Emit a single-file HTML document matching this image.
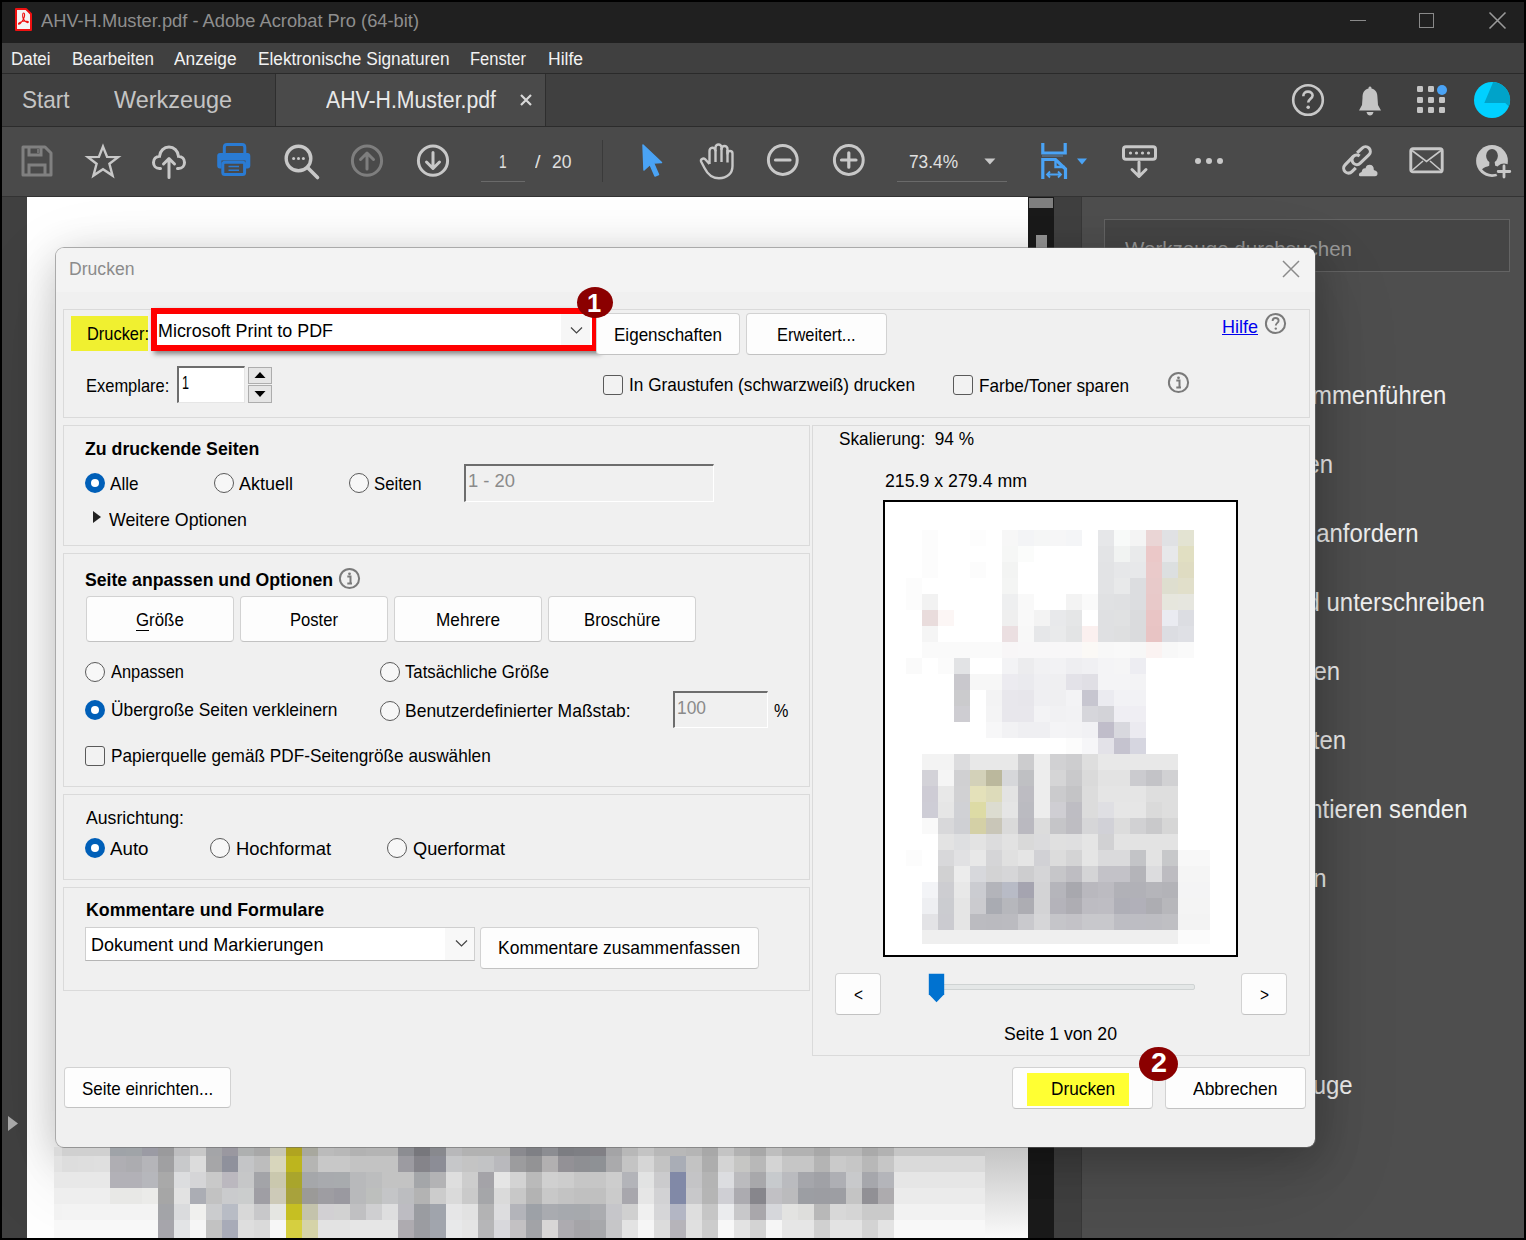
<!DOCTYPE html>
<html><head><meta charset="utf-8"><style>
html,body{margin:0;padding:0;}
body{width:1526px;height:1240px;position:relative;overflow:hidden;background:#000;font-family:"Liberation Sans",sans-serif;}
div{position:absolute;box-sizing:border-box;}
.t{white-space:nowrap;line-height:1;transform-origin:0 0;}
</style></head><body>
<div style="left:2px;top:2px;width:1522px;height:41px;background:#202020;"></div>
<div style="left:2px;top:43px;width:1522px;height:30px;background:#404040;"></div>
<div style="left:2px;top:73px;width:1522px;height:1px;background:#2a2a2a;"></div>
<div style="left:2px;top:74px;width:1522px;height:52px;background:#404040;"></div>
<div style="left:275px;top:74px;width:270px;height:52px;background:#4a4a4a;"></div>
<div style="left:275px;top:74px;width:1px;height:52px;background:#2e2e2e;"></div>
<div style="left:545px;top:74px;width:1px;height:52px;background:#2e2e2e;"></div>
<div style="left:2px;top:126px;width:1522px;height:1px;background:#2c2c2c;"></div>
<div style="left:2px;top:127px;width:1522px;height:69px;background:#4a4a4a;"></div>
<div style="left:2px;top:196px;width:1522px;height:1px;background:#333;"></div>
<div style="left:2px;top:197px;width:25px;height:1041px;background:#404040;"></div>
<div style="left:27px;top:197px;width:1001px;height:1041px;background:#ffffff;"></div>
<div style="left:1028px;top:197px;width:26px;height:1041px;background:#1a1a1a;"></div>
<div style="left:1029px;top:198px;width:24px;height:10px;background:#808080;"></div>
<div style="left:1036px;top:235px;width:11px;height:900px;background:#949494;"></div>
<div style="left:1054px;top:197px;width:27px;height:1041px;background:#404040;"></div>
<div style="left:1081px;top:197px;width:1px;height:1041px;background:#383838;"></div>
<div style="left:1082px;top:197px;width:442px;height:1041px;background:#4e4e4e;"></div>
<svg style="position:absolute;left:14px;top:7px;" width="19" height="25" viewBox="0 0 19 25"><path d="M2 2 H12 L17 7 V23 H2 Z" fill="#f4f4f4" stroke="#ee1111" stroke-width="2" stroke-linejoin="round"/><path d="M9.5 6 C11 6 11 9 9.5 12 C8 15 5 18 4.5 17 C4 16 8 14 11 14 C14 14 15 15 14 15.5 C13 16 10 14 9 11 C8.5 9 8.5 6 9.5 6Z" fill="none" stroke="#ee1111" stroke-width="1.1"/></svg>
<div class="t" style="left:41px;top:11.76px;font-size:18px;color:#8e8e8e;transform:scaleX(1.0156);">AHV-H.Muster.pdf - Adobe Acrobat Pro (64-bit)</div>
<div style="left:1350px;top:20px;width:16px;height:1px;background:#8a8a8a;"></div>
<div style="left:1419px;top:13px;width:15px;height:15px;background:transparent;border:1.5px solid #8a8a8a;"></div>
<svg style="position:absolute;left:1488px;top:11px;" width="19" height="19" viewBox="0 0 19 19"><path d="M1.5 1.5 L17.5 17.5 M17.5 1.5 L1.5 17.5" stroke="#9a9a9a" stroke-width="1.6"/></svg>
<div class="t" style="left:11px;top:49.86px;font-size:18px;color:#f2f2f2;transform:scaleX(0.9400);">Datei</div>
<div class="t" style="left:71.6px;top:49.86px;font-size:18px;color:#f2f2f2;transform:scaleX(0.9418);">Bearbeiten</div>
<div class="t" style="left:174.2px;top:49.86px;font-size:18px;color:#f2f2f2;transform:scaleX(0.9608);">Anzeige</div>
<div class="t" style="left:257.5px;top:49.86px;font-size:18px;color:#f2f2f2;transform:scaleX(0.9569);">Elektronische Signaturen</div>
<div class="t" style="left:470.3px;top:49.86px;font-size:18px;color:#f2f2f2;transform:scaleX(0.9177);">Fenster</div>
<div class="t" style="left:547.5px;top:49.86px;font-size:18px;color:#f2f2f2;transform:scaleX(0.9720);">Hilfe</div>
<div class="t" style="left:22.4px;top:87.88px;font-size:24.6px;color:#c4c4c4;transform:scaleX(0.9162);">Start</div>
<div class="t" style="left:114px;top:87.88px;font-size:24.6px;color:#c4c4c4;transform:scaleX(0.9518);">Werkzeuge</div>
<div class="t" style="left:325.6px;top:89.23px;font-size:23px;color:#e8e8e8;transform:scaleX(0.9236);">AHV-H.Muster.pdf</div>
<svg style="position:absolute;left:519px;top:93px;" width="14" height="14" viewBox="0 0 14 14"><path d="M2 2 L12 12 M12 2 L2 12" stroke="#d8d8d8" stroke-width="2.2"/></svg>
<svg style="position:absolute;left:1291px;top:83px;" width="34" height="34" viewBox="0 0 34 34"><circle cx="17" cy="17" r="14.8" fill="none" stroke="#c8c8c8" stroke-width="2.6"/><path d="M12.3 13.2 C12.3 9.8 14.5 8.6 17 8.6 C19.6 8.6 21.6 10.2 21.6 12.6 C21.6 15.6 17.2 16 17.2 19.6" fill="none" stroke="#c8c8c8" stroke-width="2.6"/><circle cx="17.2" cy="24.2" r="1.8" fill="#c8c8c8"/></svg>
<svg style="position:absolute;left:1356px;top:84px;" width="28" height="34" viewBox="0 0 28 34"><path d="M14 2.5 C15.5 2.5 15.5 4 15.5 4.5 C20 5.5 21.5 9 21.5 14 L22 21 L25 26.5 H3 L6 21 L6.5 14 C6.5 9 8 5.5 12.5 4.5 C12.5 4 12.5 2.5 14 2.5Z" fill="#c4c4c4"/><path d="M10.5 28 H17.5 C17 30.5 15.5 31.5 14 31.5 C12.5 31.5 11 30.5 10.5 28Z" fill="#c4c4c4"/></svg>
<div style="left:1417.3px;top:86.3px;width:6px;height:6px;background:#c4c4c4;border-radius:1.2px;"></div>
<div style="left:1417.3px;top:96.8px;width:6px;height:6px;background:#c4c4c4;border-radius:1.2px;"></div>
<div style="left:1417.3px;top:107.3px;width:6px;height:6px;background:#c4c4c4;border-radius:1.2px;"></div>
<div style="left:1428px;top:86.3px;width:6px;height:6px;background:#c4c4c4;border-radius:1.2px;"></div>
<div style="left:1428px;top:96.8px;width:6px;height:6px;background:#c4c4c4;border-radius:1.2px;"></div>
<div style="left:1428px;top:107.3px;width:6px;height:6px;background:#c4c4c4;border-radius:1.2px;"></div>
<div style="left:1438.5px;top:96.8px;width:6px;height:6px;background:#c4c4c4;border-radius:1.2px;"></div>
<div style="left:1438.5px;top:107.3px;width:6px;height:6px;background:#c4c4c4;border-radius:1.2px;"></div>
<div style="left:1437px;top:84.5px;width:10px;height:10px;border-radius:50%;background:#4aa3f5;"></div>
<svg style="position:absolute;left:1468px;top:76px;" width="48" height="48" viewBox="0 0 48 48"><circle cx="24" cy="24" r="18" fill="#00d0ff"/><path d="M25.2 6 L16.3 27.1 H37.2 L40.9 30.5 A18 18 0 0 0 25.2 6 Z" fill="#00a3c9"/></svg>
<svg style="position:absolute;left:20px;top:144px;" width="34" height="34" viewBox="0 0 34 34"><path d="M3 3 H25 L31 9 V31 H3 Z" fill="none" stroke="#808080" stroke-width="3" stroke-linejoin="round"/><path d="M9 3 V11 H21 V3" fill="none" stroke="#808080" stroke-width="3"/><path d="M18 5 V9" stroke="#808080" stroke-width="1.5"/><path d="M9 31 V21 H25 V31" fill="none" stroke="#808080" stroke-width="3"/></svg>
<svg style="position:absolute;left:84px;top:142px;" width="38" height="37" viewBox="0 0 38 37"><path d="M19 2.5 L23.4 13.6 L35.2 13.8 L25.9 21 L29.3 33.7 L19 26.8 L8.7 33.7 L12.1 21 L2.8 13.8 L14.6 13.6 Z" fill="none" stroke="#c8c8c8" stroke-width="2.6" stroke-linejoin="miter" transform="translate(19 19) scale(0.93) translate(-19 -18)"/></svg>
<svg style="position:absolute;left:151px;top:144px;" width="36" height="35" viewBox="0 0 36 35"><path d="M9.5 24.5 H8.5 C4.5 24.5 2.5 21.5 2.5 18.5 C2.5 15 5 12.5 8.5 12.3 C9 7 13 3 18 3 C23 3 27 7 27.5 12.3 C31 12.5 33.5 15 33.5 18.5 C33.5 21.5 31.5 24.5 27.5 24.5 H26.5" fill="none" stroke="#c8c8c8" stroke-width="3" stroke-linecap="round"/><path d="M18 33.5 V15 M12.5 20 L18 14.5 L23.5 20" fill="none" stroke="#c8c8c8" stroke-width="3" stroke-linecap="round" stroke-linejoin="round"/></svg>
<svg style="position:absolute;left:216px;top:143px;" width="36" height="35" viewBox="0 0 36 35"><path d="M8.3 11 V4.5 Q8.3 1.6 11 1.6 H26 Q28.8 1.6 28.8 4.5 V11" fill="none" stroke="#2a7bd3" stroke-width="3"/><path d="M4 10 H31.5 Q34.3 10 34.3 13 V22.5 Q34.3 25.5 31.5 25.5 H29.5 V17.5 H5.5 V25.5 H4 Q1.2 25.5 1.2 22.5 V13 Q1.2 10 4 10Z" fill="#2a7bd3"/><rect x="6.8" y="19.3" width="21.8" height="12.3" rx="2" fill="none" stroke="#2a7bd3" stroke-width="3"/><path d="M12.5 23.5 H23 M12.5 27.2 H23" stroke="#2a7bd3" stroke-width="1.5"/></svg>
<svg style="position:absolute;left:282px;top:142px;" width="40" height="40" viewBox="0 0 40 40"><circle cx="16.5" cy="16.5" r="12.3" fill="none" stroke="#c8c8c8" stroke-width="3.4"/><path d="M25.5 25.5 L35.5 35.5" stroke="#c8c8c8" stroke-width="3.6" stroke-linecap="round"/><circle cx="11.6" cy="16.5" r="1.5" fill="#c8c8c8"/><circle cx="16.5" cy="16.5" r="1.5" fill="#c8c8c8"/><circle cx="21.4" cy="16.5" r="1.5" fill="#c8c8c8"/></svg>
<svg style="position:absolute;left:350px;top:144px;" width="34" height="34" viewBox="0 0 34 34"><circle cx="17" cy="16.7" r="14.6" fill="none" stroke="#7e7e7e" stroke-width="3"/><path d="M17 25 V9.5 M10.5 15.5 L17 9 L23.5 15.5" fill="none" stroke="#7e7e7e" stroke-width="3" stroke-linecap="round" stroke-linejoin="round"/></svg>
<svg style="position:absolute;left:416px;top:144px;" width="34" height="34" viewBox="0 0 34 34"><circle cx="17" cy="16.7" r="14.6" fill="none" stroke="#c8c8c8" stroke-width="3"/><path d="M17 8.5 V24 M10.5 18 L17 24.5 L23.5 18" fill="none" stroke="#c8c8c8" stroke-width="3" stroke-linecap="round" stroke-linejoin="round"/></svg>
<div class="t" style="left:499px;top:152.76px;font-size:18px;color:#e0e0e0;transform:scaleX(0.7592);">1</div>
<div style="left:481px;top:181px;width:44px;height:1px;background:#6a6a6a;"></div>
<div class="t" style="left:535px;top:152.76px;font-size:18px;color:#e0e0e0;transform:scaleX(1.0998);">/</div>
<div class="t" style="left:552.2px;top:152.76px;font-size:18px;color:#e0e0e0;transform:scaleX(0.9739);">20</div>
<div style="left:602px;top:140px;width:1px;height:42px;background:#3a3a3a;"></div>
<svg style="position:absolute;left:640px;top:143px;" width="25" height="36" viewBox="0 0 25 36"><path d="M3 2 L21.5 19.5 L13.5 20 L18.5 31.5 L15 33 L10 21.5 L4 27 Z" fill="#4aa3f5" stroke="#4aa3f5" stroke-width="1.5" stroke-linejoin="round"/></svg>
<svg style="position:absolute;left:690px;top:138px;" width="55" height="47" viewBox="0 0 55 47"><path d="M19.5 26 V13 A3 3 0 0 1 25.5 12.5 V9.5 A3 3 0 0 1 31.5 9.5 V11 A3 3 0 0 1 37.5 11 V15.5 A2.5 2.5 0 0 1 42.5 15.5 V28 C42.5 35.5 37 40.3 29 40.3 C22 40.3 17.5 36 14.5 30 L11.2 23.8 C10.2 21.5 13 19.6 15.2 21.2 L19.5 26" fill="none" stroke="#c8c8c8" stroke-width="2.4" stroke-linejoin="round"/><path d="M25.5 12 V24 M31.5 10 V24 M37.5 12 V24.5" stroke="#c8c8c8" stroke-width="2.4"/></svg>
<svg style="position:absolute;left:765px;top:143px;" width="36" height="35" viewBox="0 0 36 35"><circle cx="17.8" cy="17" r="14.4" fill="none" stroke="#c8c8c8" stroke-width="3"/><path d="M10.5 17 H25" stroke="#c8c8c8" stroke-width="3.2" stroke-linecap="round"/></svg>
<svg style="position:absolute;left:831px;top:143px;" width="36" height="35" viewBox="0 0 36 35"><circle cx="17.8" cy="17" r="14.4" fill="none" stroke="#c8c8c8" stroke-width="3"/><path d="M10.5 17 H25 M17.8 9.8 V24.2" stroke="#c8c8c8" stroke-width="3.2" stroke-linecap="round"/></svg>
<div class="t" style="left:909px;top:152.76px;font-size:18px;color:#e0e0e0;transform:scaleX(0.9601);">73.4%</div>
<svg style="position:absolute;left:983px;top:157px;" width="14" height="9" viewBox="0 0 14 9"><path d="M1.4 1.5 H12.4 L6.9 7.6 Z" fill="#c8c8c8"/></svg>
<div style="left:897px;top:181px;width:110px;height:1px;background:#6a6a6a;"></div>
<svg style="position:absolute;left:1039px;top:141px;" width="30" height="40" viewBox="0 0 30 40"><path d="M3.8 2 V12 H26.2 V2" fill="none" stroke="#4aa3f5" stroke-width="3.2"/><path d="M3 15 H24" stroke="#59748f" stroke-width="1.5"/><path d="M3.8 38 V18.5 H16.5 L26.5 28 V38" fill="none" stroke="#4aa3f5" stroke-width="3.2"/><path d="M16.5 18.5 V26 H26" fill="none" stroke="#4aa3f5" stroke-width="2.4"/><path d="M8 33.5 H22 M11 30.5 L8 33.5 L11 36.5 M19 30.5 L22 33.5 L19 36.5" fill="none" stroke="#4aa3f5" stroke-width="1.8"/></svg>
<svg style="position:absolute;left:1076px;top:157px;" width="12" height="9" viewBox="0 0 12 9"><path d="M1 1.5 H11 L6 7.6 Z" fill="#4aa3f5"/></svg>
<svg style="position:absolute;left:1120px;top:144px;" width="38" height="36" viewBox="0 0 38 36"><rect x="3.5" y="2.8" width="32" height="12.5" rx="2.5" fill="none" stroke="#c8c8c8" stroke-width="3"/><circle cx="10.5" cy="9" r="1.6" fill="#c8c8c8"/><circle cx="16.5" cy="9" r="1.6" fill="#c8c8c8"/><circle cx="22.5" cy="9" r="1.6" fill="#c8c8c8"/><circle cx="28.5" cy="9" r="1.6" fill="#c8c8c8"/><path d="M19 18 V32 M12 25.5 L19 32.5 L26 25.5" fill="none" stroke="#c8c8c8" stroke-width="3" stroke-linecap="round" stroke-linejoin="round"/></svg>
<div style="left:1195.2px;top:158px;width:6px;height:6px;border-radius:50%;background:#c8c8c8;"></div>
<div style="left:1205.9px;top:158px;width:6px;height:6px;border-radius:50%;background:#c8c8c8;"></div>
<div style="left:1216.6px;top:158px;width:6px;height:6px;border-radius:50%;background:#c8c8c8;"></div>
<svg style="position:absolute;left:1336px;top:138px;" width="50" height="44" viewBox="0 0 50 44"><path d="M21.1 14.9 L26.18 10.02 A4.8 4.8 0 0 1 32.82 16.98 L24.24 25.16 A4.8 4.8 0 0 1 17.36 18.44" fill="none" stroke="#c8c8c8" stroke-width="3.1"/><path d="M23.68 17.96 A4.8 4.8 0 0 0 17.36 18.44 L9.06 26.94 A4.8 4.8 0 0 0 15.94 33.66 L19.8 29.9" fill="none" stroke="#c8c8c8" stroke-width="3.1"/><path d="M24 39 C21.5 39 21.5 34 25 33.5 C25.5 31 27 29.5 29 29.5 C29.5 27 31.5 26 33.5 26 C36.5 26 38.5 28.5 38.5 31.5 C41 32 42.2 33.5 42.2 35.5 C42.2 37.5 41 39 39 39 Z" fill="#c8c8c8" stroke="#4a4a4a" stroke-width="1.4"/></svg>
<svg style="position:absolute;left:1408px;top:146px;" width="36" height="29" viewBox="0 0 36 29"><rect x="2.8" y="2.7" width="31.4" height="23.2" rx="2.2" fill="none" stroke="#c8c8c8" stroke-width="2.9"/><path d="M4 4.5 L18.5 15.5 L33 4.5 M4 24.5 L15 15 M33 24.5 L22 15" fill="none" stroke="#c8c8c8" stroke-width="1.6"/></svg>
<svg style="position:absolute;left:1470px;top:138px;" width="46" height="44" viewBox="0 0 46 44"><circle cx="22" cy="23" r="15.9" fill="#c8c8c8"/><ellipse cx="22" cy="17.8" rx="5.9" ry="6.9" fill="#4a4a4a"/><path d="M12 31.2 C14 29.5 17 28.6 19.2 27.8 L19.5 23 H24.5 L25.2 27.8 C27.5 28.3 29.5 29 31.5 30 L27.8 35.6 C26 36 23.8 36.2 22 36.2 C18 36.2 14.5 34 12 31.2 Z" fill="#4a4a4a"/><circle cx="34" cy="33.5" r="8" fill="#4a4a4a"/><path d="M34 28 V39 M28.2 33.5 H39.8" stroke="#c8c8c8" stroke-width="2.8" stroke-linecap="round"/></svg>
<div style="left:1104px;top:219px;width:406px;height:53px;background:#454545;border:1px solid #646464;"></div>
<div class="t" style="left:1124.5px;top:238.87px;font-size:20px;color:#9a9a9a;transform:scaleX(1.0278);">Werkzeuge durchsuchen</div>
<div class="t" style="right:80px;top:383.34px;font-size:25px;color:#f0f0f0;transform:scaleX(0.957);transform-origin:100% 0;">Dateien zusammenführen</div>
<div class="t" style="right:193.20000000000005px;top:452.04px;font-size:25px;color:#f0f0f0;transform:scaleX(0.957);transform-origin:100% 0;">PDF bearbeiten</div>
<div class="t" style="right:107px;top:520.94px;font-size:25px;color:#f0f0f0;transform:scaleX(0.957);transform-origin:100% 0;">Unterschriften anfordern</div>
<div class="t" style="right:41px;top:589.74px;font-size:25px;color:#f0f0f0;transform:scaleX(0.957);transform-origin:100% 0;">Ausfüllen und unterschreiben</div>
<div class="t" style="right:186.20000000000005px;top:658.94px;font-size:25px;color:#f0f0f0;transform:scaleX(0.957);transform-origin:100% 0;">PDF exportieren</div>
<div class="t" style="right:180.29999999999995px;top:728.34px;font-size:25px;color:#f0f0f0;transform:scaleX(0.957);transform-origin:100% 0;">Formular vorbereiten</div>
<div class="t" style="right:58.299999999999955px;top:797.34px;font-size:25px;color:#f0f0f0;transform:scaleX(0.957);transform-origin:100% 0;">Zum Kommentieren senden</div>
<div class="t" style="right:199px;top:865.74px;font-size:25px;color:#f0f0f0;transform:scaleX(0.957);transform-origin:100% 0;">Kommentieren</div>
<div class="t" style="right:173.5px;top:1073.14px;font-size:25px;color:#f0f0f0;transform:scaleX(0.957);transform-origin:100% 0;">Weitere Werkzeuge</div>
<div style="left:55px;top:247px;width:1261px;height:901px;border-radius:9px;box-shadow:4px 10px 40px rgba(0,0,0,0.22),0 30px 90px rgba(0,0,0,0.12);"></div>
<div style="left:54px;top:1147px;width:931px;height:91px;overflow:hidden;"><div style="left:-8px;top:0px;width:16px;height:9px;background:#dadada"></div><div style="left:8px;top:0px;width:16px;height:9px;background:#d0d0d0"></div><div style="left:24px;top:0px;width:16px;height:9px;background:#d0d0d0"></div><div style="left:40px;top:0px;width:16px;height:9px;background:#d0d0d0"></div><div style="left:56px;top:0px;width:16px;height:9px;background:#9fa3a8"></div><div style="left:72px;top:0px;width:16px;height:9px;background:#a0a4a8"></div><div style="left:88px;top:0px;width:16px;height:9px;background:#9b9ba4"></div><div style="left:104px;top:0px;width:16px;height:9px;background:#9a9a9c"></div><div style="left:120px;top:0px;width:16px;height:9px;background:#bebec0"></div><div style="left:136px;top:0px;width:16px;height:9px;background:#c8c8c8"></div><div style="left:152px;top:0px;width:16px;height:9px;background:#a4a5a8"></div><div style="left:168px;top:0px;width:16px;height:9px;background:#9a98a0"></div><div style="left:184px;top:0px;width:16px;height:9px;background:#aeb0b0"></div><div style="left:200px;top:0px;width:16px;height:9px;background:#a8a8a8"></div><div style="left:216px;top:0px;width:16px;height:9px;background:#c8c7b6"></div><div style="left:232px;top:0px;width:16px;height:9px;background:#b0a420"></div><div style="left:248px;top:0px;width:16px;height:9px;background:#a8a89e"></div><div style="left:264px;top:0px;width:16px;height:9px;background:#bbbbbb"></div><div style="left:280px;top:0px;width:16px;height:9px;background:#b8b8b8"></div><div style="left:296px;top:0px;width:16px;height:9px;background:#b2b2b2"></div><div style="left:312px;top:0px;width:16px;height:9px;background:#b4b4b4"></div><div style="left:328px;top:0px;width:16px;height:9px;background:#b4b4b4"></div><div style="left:344px;top:0px;width:16px;height:9px;background:#8c8d92"></div><div style="left:360px;top:0px;width:16px;height:9px;background:#77777c"></div><div style="left:376px;top:0px;width:16px;height:9px;background:#88898e"></div><div style="left:392px;top:0px;width:16px;height:9px;background:#b8b8ba"></div><div style="left:408px;top:0px;width:16px;height:9px;background:#b2b2b2"></div><div style="left:424px;top:0px;width:16px;height:9px;background:#b2b2b2"></div><div style="left:440px;top:0px;width:16px;height:9px;background:#b2b2b2"></div><div style="left:456px;top:0px;width:16px;height:9px;background:#8a8a8f"></div><div style="left:472px;top:0px;width:16px;height:9px;background:#7f8085"></div><div style="left:488px;top:0px;width:16px;height:9px;background:#8c8d92"></div><div style="left:504px;top:0px;width:16px;height:9px;background:#7c7d82"></div><div style="left:520px;top:0px;width:16px;height:9px;background:#7e7f84"></div><div style="left:536px;top:0px;width:16px;height:9px;background:#818085"></div><div style="left:552px;top:0px;width:16px;height:9px;background:#a4a4a6"></div><div style="left:568px;top:0px;width:16px;height:9px;background:#b8b8b8"></div><div style="left:584px;top:0px;width:16px;height:9px;background:#c4c4c4"></div><div style="left:600px;top:0px;width:16px;height:9px;background:#b8b8b8"></div><div style="left:616px;top:0px;width:16px;height:9px;background:#b8b8b8"></div><div style="left:632px;top:0px;width:16px;height:9px;background:#b5b5b5"></div><div style="left:648px;top:0px;width:16px;height:9px;background:#a8a8a8"></div><div style="left:664px;top:0px;width:16px;height:9px;background:#c4c4c4"></div><div style="left:680px;top:0px;width:16px;height:9px;background:#b2b2b2"></div><div style="left:696px;top:0px;width:16px;height:9px;background:#a8a8a8"></div><div style="left:712px;top:0px;width:16px;height:9px;background:#bebebe"></div><div style="left:728px;top:0px;width:16px;height:9px;background:#b2b2b2"></div><div style="left:744px;top:0px;width:16px;height:9px;background:#b2b2b2"></div><div style="left:760px;top:0px;width:16px;height:9px;background:#a8a8a8"></div><div style="left:776px;top:0px;width:16px;height:9px;background:#b8b8b8"></div><div style="left:792px;top:0px;width:16px;height:9px;background:#b8b8b8"></div><div style="left:808px;top:0px;width:16px;height:9px;background:#aaaaaa"></div><div style="left:824px;top:0px;width:16px;height:9px;background:#b2b2b2"></div><div style="left:840px;top:0px;width:16px;height:9px;background:#c6c6c6"></div><div style="left:856px;top:0px;width:16px;height:9px;background:#c6c6c6"></div><div style="left:872px;top:0px;width:16px;height:9px;background:#c6c6c6"></div><div style="left:888px;top:0px;width:16px;height:9px;background:#c6c6c6"></div><div style="left:904px;top:0px;width:16px;height:9px;background:#c6c6c6"></div><div style="left:920px;top:0px;width:16px;height:9px;background:#c6c6c6"></div><div style="left:-8px;top:9px;width:16px;height:16px;background:#e2e2e2"></div><div style="left:8px;top:9px;width:16px;height:16px;background:#dddddd"></div><div style="left:24px;top:9px;width:16px;height:16px;background:#dedede"></div><div style="left:40px;top:9px;width:16px;height:16px;background:#dfdfdf"></div><div style="left:56px;top:9px;width:16px;height:16px;background:#afaeb3"></div><div style="left:72px;top:9px;width:16px;height:16px;background:#acacb0"></div><div style="left:88px;top:9px;width:16px;height:16px;background:#b5b5b9"></div><div style="left:104px;top:9px;width:16px;height:16px;background:#a0a0a2"></div><div style="left:120px;top:9px;width:16px;height:16px;background:#c8c9cb"></div><div style="left:136px;top:9px;width:16px;height:16px;background:#dcdcdc"></div><div style="left:152px;top:9px;width:16px;height:16px;background:#a6a6a8"></div><div style="left:168px;top:9px;width:16px;height:16px;background:#8f919c"></div><div style="left:184px;top:9px;width:16px;height:16px;background:#c4c5c7"></div><div style="left:200px;top:9px;width:16px;height:16px;background:#bdbdbd"></div><div style="left:216px;top:9px;width:16px;height:16px;background:#d8d6bc"></div><div style="left:232px;top:9px;width:16px;height:16px;background:#bdb51e"></div><div style="left:248px;top:9px;width:16px;height:16px;background:#b5b5b3"></div><div style="left:264px;top:9px;width:16px;height:16px;background:#c8c8c8"></div><div style="left:280px;top:9px;width:16px;height:16px;background:#c8c8c8"></div><div style="left:296px;top:9px;width:16px;height:16px;background:#c3c3c3"></div><div style="left:312px;top:9px;width:16px;height:16px;background:#c3c3c3"></div><div style="left:328px;top:9px;width:16px;height:16px;background:#c3c3c3"></div><div style="left:344px;top:9px;width:16px;height:16px;background:#9c9ba1"></div><div style="left:360px;top:9px;width:16px;height:16px;background:#85848a"></div><div style="left:376px;top:9px;width:16px;height:16px;background:#8c8d96"></div><div style="left:392px;top:9px;width:16px;height:16px;background:#c6c7c9"></div><div style="left:408px;top:9px;width:16px;height:16px;background:#c4c4c4"></div><div style="left:424px;top:9px;width:16px;height:16px;background:#c2c3c5"></div><div style="left:440px;top:9px;width:16px;height:16px;background:#b9b9bd"></div><div style="left:456px;top:9px;width:16px;height:16px;background:#9c9c9e"></div><div style="left:472px;top:9px;width:16px;height:16px;background:#939395"></div><div style="left:488px;top:9px;width:16px;height:16px;background:#b2b0b1"></div><div style="left:504px;top:9px;width:16px;height:16px;background:#939196"></div><div style="left:520px;top:9px;width:16px;height:16px;background:#8e8f93"></div><div style="left:536px;top:9px;width:16px;height:16px;background:#8e9195"></div><div style="left:552px;top:9px;width:16px;height:16px;background:#aaaaac"></div><div style="left:568px;top:9px;width:16px;height:16px;background:#c4c4c4"></div><div style="left:584px;top:9px;width:16px;height:16px;background:#d6d6d6"></div><div style="left:600px;top:9px;width:16px;height:16px;background:#c3c3c3"></div><div style="left:616px;top:9px;width:16px;height:16px;background:#a9adb6"></div><div style="left:632px;top:9px;width:16px;height:16px;background:#c3c3c3"></div><div style="left:648px;top:9px;width:16px;height:16px;background:#adadad"></div><div style="left:664px;top:9px;width:16px;height:16px;background:#d4d4d4"></div><div style="left:680px;top:9px;width:16px;height:16px;background:#c6c6c4"></div><div style="left:696px;top:9px;width:16px;height:16px;background:#b8b8b8"></div><div style="left:712px;top:9px;width:16px;height:16px;background:#d4d4d4"></div><div style="left:728px;top:9px;width:16px;height:16px;background:#c6c6c6"></div><div style="left:744px;top:9px;width:16px;height:16px;background:#c6c6c6"></div><div style="left:760px;top:9px;width:16px;height:16px;background:#b4b4b4"></div><div style="left:776px;top:9px;width:16px;height:16px;background:#cacaca"></div><div style="left:792px;top:9px;width:16px;height:16px;background:#c6c6c6"></div><div style="left:808px;top:9px;width:16px;height:16px;background:#b8b8b8"></div><div style="left:824px;top:9px;width:16px;height:16px;background:#c6c6c6"></div><div style="left:840px;top:9px;width:16px;height:16px;background:#dadada"></div><div style="left:856px;top:9px;width:16px;height:16px;background:#dadada"></div><div style="left:872px;top:9px;width:16px;height:16px;background:#dadada"></div><div style="left:888px;top:9px;width:16px;height:16px;background:#dadada"></div><div style="left:904px;top:9px;width:16px;height:16px;background:#dadada"></div><div style="left:920px;top:9px;width:16px;height:16px;background:#dadada"></div><div style="left:-8px;top:25px;width:16px;height:16px;background:#e8e8e8"></div><div style="left:8px;top:25px;width:16px;height:16px;background:#e8e8e8"></div><div style="left:24px;top:25px;width:16px;height:16px;background:#e8e8e8"></div><div style="left:40px;top:25px;width:16px;height:16px;background:#e8e8e8"></div><div style="left:56px;top:25px;width:16px;height:16px;background:#b2b1b7"></div><div style="left:72px;top:25px;width:16px;height:16px;background:#b2b1b7"></div><div style="left:88px;top:25px;width:16px;height:16px;background:#b6b7bc"></div><div style="left:104px;top:25px;width:16px;height:16px;background:#a9a9a9"></div><div style="left:120px;top:25px;width:16px;height:16px;background:#dcdddf"></div><div style="left:136px;top:25px;width:16px;height:16px;background:#d5d5d7"></div><div style="left:152px;top:25px;width:16px;height:16px;background:#c9c9c9"></div><div style="left:168px;top:25px;width:16px;height:16px;background:#bbb8bf"></div><div style="left:184px;top:25px;width:16px;height:16px;background:#c6c7c8"></div><div style="left:200px;top:25px;width:16px;height:16px;background:#a3a4a8"></div><div style="left:216px;top:25px;width:16px;height:16px;background:#cac8ae"></div><div style="left:232px;top:25px;width:16px;height:16px;background:#a9a52c"></div><div style="left:248px;top:25px;width:16px;height:16px;background:#a5a7aa"></div><div style="left:264px;top:25px;width:16px;height:16px;background:#a8aaae"></div><div style="left:280px;top:25px;width:16px;height:16px;background:#a8abae"></div><div style="left:296px;top:25px;width:16px;height:16px;background:#b8b9bb"></div><div style="left:312px;top:25px;width:16px;height:16px;background:#bcbdbe"></div><div style="left:328px;top:25px;width:16px;height:16px;background:#c3c3c3"></div><div style="left:344px;top:25px;width:16px;height:16px;background:#c3c3c3"></div><div style="left:360px;top:25px;width:16px;height:16px;background:#a4a6a9"></div><div style="left:376px;top:25px;width:16px;height:16px;background:#b3b3b5"></div><div style="left:392px;top:25px;width:16px;height:16px;background:#dedede"></div><div style="left:408px;top:25px;width:16px;height:16px;background:#cdcdcd"></div><div style="left:424px;top:25px;width:16px;height:16px;background:#a4a3a8"></div><div style="left:440px;top:25px;width:16px;height:16px;background:#e5e5e5"></div><div style="left:456px;top:25px;width:16px;height:16px;background:#d3d3d3"></div><div style="left:472px;top:25px;width:16px;height:16px;background:#bababa"></div><div style="left:488px;top:25px;width:16px;height:16px;background:#d0d0d0"></div><div style="left:504px;top:25px;width:16px;height:16px;background:#cdcdcd"></div><div style="left:520px;top:25px;width:16px;height:16px;background:#c6c6c6"></div><div style="left:536px;top:25px;width:16px;height:16px;background:#c6c6c6"></div><div style="left:552px;top:25px;width:16px;height:16px;background:#cdcdcd"></div><div style="left:568px;top:25px;width:16px;height:16px;background:#b3b4b9"></div><div style="left:584px;top:25px;width:16px;height:16px;background:#e2e3e3"></div><div style="left:600px;top:25px;width:16px;height:16px;background:#cbcbcd"></div><div style="left:616px;top:25px;width:16px;height:16px;background:#8189a7"></div><div style="left:632px;top:25px;width:16px;height:16px;background:#c4c4c6"></div><div style="left:648px;top:25px;width:16px;height:16px;background:#b4b4b4"></div><div style="left:664px;top:25px;width:16px;height:16px;background:#dcdde0"></div><div style="left:680px;top:25px;width:16px;height:16px;background:#bbbbbe"></div><div style="left:696px;top:25px;width:16px;height:16px;background:#a8a8ab"></div><div style="left:712px;top:25px;width:16px;height:16px;background:#c7cacd"></div><div style="left:728px;top:25px;width:16px;height:16px;background:#babbbf"></div><div style="left:744px;top:25px;width:16px;height:16px;background:#a5a6ab"></div><div style="left:760px;top:25px;width:16px;height:16px;background:#a0a1a6"></div><div style="left:776px;top:25px;width:16px;height:16px;background:#aeafb4"></div><div style="left:792px;top:25px;width:16px;height:16px;background:#c8c9cb"></div><div style="left:808px;top:25px;width:16px;height:16px;background:#a6a7ac"></div><div style="left:824px;top:25px;width:16px;height:16px;background:#b4b5ba"></div><div style="left:840px;top:25px;width:16px;height:16px;background:#e6e6e6"></div><div style="left:856px;top:25px;width:16px;height:16px;background:#e6e6e6"></div><div style="left:872px;top:25px;width:16px;height:16px;background:#e6e6e6"></div><div style="left:888px;top:25px;width:16px;height:16px;background:#e6e6e6"></div><div style="left:904px;top:25px;width:16px;height:16px;background:#e6e6e6"></div><div style="left:920px;top:25px;width:16px;height:16px;background:#e6e6e6"></div><div style="left:-8px;top:41px;width:16px;height:16px;background:#eeeeee"></div><div style="left:8px;top:41px;width:16px;height:16px;background:#eeeeee"></div><div style="left:24px;top:41px;width:16px;height:16px;background:#eeeeee"></div><div style="left:40px;top:41px;width:16px;height:16px;background:#eeeeee"></div><div style="left:56px;top:41px;width:16px;height:16px;background:#e8e8e6"></div><div style="left:72px;top:41px;width:16px;height:16px;background:#e8e8e6"></div><div style="left:88px;top:41px;width:16px;height:16px;background:#ebebe9"></div><div style="left:104px;top:41px;width:16px;height:16px;background:#a6a6a6"></div><div style="left:120px;top:41px;width:16px;height:16px;background:#e2e2e2"></div><div style="left:136px;top:41px;width:16px;height:16px;background:#abadb4"></div><div style="left:152px;top:41px;width:16px;height:16px;background:#c2c2c2"></div><div style="left:168px;top:41px;width:16px;height:16px;background:#cacbcd"></div><div style="left:184px;top:41px;width:16px;height:16px;background:#cbcdcd"></div><div style="left:200px;top:41px;width:16px;height:16px;background:#9f9ea4"></div><div style="left:216px;top:41px;width:16px;height:16px;background:#cdcab8"></div><div style="left:232px;top:41px;width:16px;height:16px;background:#a8a23c"></div><div style="left:248px;top:41px;width:16px;height:16px;background:#9b9a98"></div><div style="left:264px;top:41px;width:16px;height:16px;background:#9e9da2"></div><div style="left:280px;top:41px;width:16px;height:16px;background:#9a99a0"></div><div style="left:296px;top:41px;width:16px;height:16px;background:#b8b9bb"></div><div style="left:312px;top:41px;width:16px;height:16px;background:#bdbfbd"></div><div style="left:328px;top:41px;width:16px;height:16px;background:#c4c5c7"></div><div style="left:344px;top:41px;width:16px;height:16px;background:#bcbdc0"></div><div style="left:360px;top:41px;width:16px;height:16px;background:#b3b3b3"></div><div style="left:376px;top:41px;width:16px;height:16px;background:#cccccc"></div><div style="left:392px;top:41px;width:16px;height:16px;background:#dadada"></div><div style="left:408px;top:41px;width:16px;height:16px;background:#cacaca"></div><div style="left:424px;top:41px;width:16px;height:16px;background:#a5a6a9"></div><div style="left:440px;top:41px;width:16px;height:16px;background:#dadada"></div><div style="left:456px;top:41px;width:16px;height:16px;background:#c8c8c8"></div><div style="left:472px;top:41px;width:16px;height:16px;background:#b3b3b3"></div><div style="left:488px;top:41px;width:16px;height:16px;background:#c8c8c8"></div><div style="left:504px;top:41px;width:16px;height:16px;background:#c3c3c3"></div><div style="left:520px;top:41px;width:16px;height:16px;background:#c0c0c0"></div><div style="left:536px;top:41px;width:16px;height:16px;background:#c0c0c0"></div><div style="left:552px;top:41px;width:16px;height:16px;background:#cbcbcb"></div><div style="left:568px;top:41px;width:16px;height:16px;background:#a8a7ad"></div><div style="left:584px;top:41px;width:16px;height:16px;background:#e6e6e6"></div><div style="left:600px;top:41px;width:16px;height:16px;background:#d2d2d4"></div><div style="left:616px;top:41px;width:16px;height:16px;background:#8189a7"></div><div style="left:632px;top:41px;width:16px;height:16px;background:#c8c8ca"></div><div style="left:648px;top:41px;width:16px;height:16px;background:#b5b5b5"></div><div style="left:664px;top:41px;width:16px;height:16px;background:#cfcfd4"></div><div style="left:680px;top:41px;width:16px;height:16px;background:#acabb0"></div><div style="left:696px;top:41px;width:16px;height:16px;background:#87868c"></div><div style="left:712px;top:41px;width:16px;height:16px;background:#c1c0c4"></div><div style="left:728px;top:41px;width:16px;height:16px;background:#bbbbbd"></div><div style="left:744px;top:41px;width:16px;height:16px;background:#9c9ea3"></div><div style="left:760px;top:41px;width:16px;height:16px;background:#9c9da2"></div><div style="left:776px;top:41px;width:16px;height:16px;background:#9d9ea3"></div><div style="left:792px;top:41px;width:16px;height:16px;background:#c4c4c4"></div><div style="left:808px;top:41px;width:16px;height:16px;background:#919095"></div><div style="left:824px;top:41px;width:16px;height:16px;background:#adabae"></div><div style="left:840px;top:41px;width:16px;height:16px;background:#ebebeb"></div><div style="left:856px;top:41px;width:16px;height:16px;background:#ebebeb"></div><div style="left:872px;top:41px;width:16px;height:16px;background:#ebebeb"></div><div style="left:888px;top:41px;width:16px;height:16px;background:#ebebeb"></div><div style="left:904px;top:41px;width:16px;height:16px;background:#ebebeb"></div><div style="left:920px;top:41px;width:16px;height:16px;background:#ebebeb"></div><div style="left:-8px;top:57px;width:16px;height:16px;background:#f2f2f2"></div><div style="left:8px;top:57px;width:16px;height:16px;background:#f3f3f3"></div><div style="left:24px;top:57px;width:16px;height:16px;background:#f3f3f3"></div><div style="left:40px;top:57px;width:16px;height:16px;background:#f3f3f3"></div><div style="left:56px;top:57px;width:16px;height:16px;background:#f3f3f3"></div><div style="left:72px;top:57px;width:16px;height:16px;background:#f3f3f3"></div><div style="left:88px;top:57px;width:16px;height:16px;background:#f3f3f3"></div><div style="left:104px;top:57px;width:16px;height:16px;background:#a3a4a8"></div><div style="left:120px;top:57px;width:16px;height:16px;background:#dadbdd"></div><div style="left:136px;top:57px;width:16px;height:16px;background:#f0f0ee"></div><div style="left:152px;top:57px;width:16px;height:16px;background:#cbccce"></div><div style="left:168px;top:57px;width:16px;height:16px;background:#b8bcc5"></div><div style="left:184px;top:57px;width:16px;height:16px;background:#d8d8d8"></div><div style="left:200px;top:57px;width:16px;height:16px;background:#c8c8ca"></div><div style="left:216px;top:57px;width:16px;height:16px;background:#e5e6e2"></div><div style="left:232px;top:57px;width:16px;height:16px;background:#c6bf22"></div><div style="left:248px;top:57px;width:16px;height:16px;background:#c4c3ac"></div><div style="left:264px;top:57px;width:16px;height:16px;background:#d2d0d3"></div><div style="left:280px;top:57px;width:16px;height:16px;background:#d2d2d2"></div><div style="left:296px;top:57px;width:16px;height:16px;background:#c0c0c2"></div><div style="left:312px;top:57px;width:16px;height:16px;background:#cfcfd1"></div><div style="left:328px;top:57px;width:16px;height:16px;background:#dededf"></div><div style="left:344px;top:57px;width:16px;height:16px;background:#bdbcc2"></div><div style="left:360px;top:57px;width:16px;height:16px;background:#9a9ca1"></div><div style="left:376px;top:57px;width:16px;height:16px;background:#a0a4ac"></div><div style="left:392px;top:57px;width:16px;height:16px;background:#e6e6e7"></div><div style="left:408px;top:57px;width:16px;height:16px;background:#e2e2e2"></div><div style="left:424px;top:57px;width:16px;height:16px;background:#b3b3b4"></div><div style="left:440px;top:57px;width:16px;height:16px;background:#dddddf"></div><div style="left:456px;top:57px;width:16px;height:16px;background:#b3b4ba"></div><div style="left:472px;top:57px;width:16px;height:16px;background:#9da1a7"></div><div style="left:488px;top:57px;width:16px;height:16px;background:#a9abb0"></div><div style="left:504px;top:57px;width:16px;height:16px;background:#a6a9ae"></div><div style="left:520px;top:57px;width:16px;height:16px;background:#a6a9ad"></div><div style="left:536px;top:57px;width:16px;height:16px;background:#abacb0"></div><div style="left:552px;top:57px;width:16px;height:16px;background:#c6c6ca"></div><div style="left:568px;top:57px;width:16px;height:16px;background:#d0d0d0"></div><div style="left:584px;top:57px;width:16px;height:16px;background:#f0f0f0"></div><div style="left:600px;top:57px;width:16px;height:16px;background:#d6d6d8"></div><div style="left:616px;top:57px;width:16px;height:16px;background:#b3b6c4"></div><div style="left:632px;top:57px;width:16px;height:16px;background:#dedede"></div><div style="left:648px;top:57px;width:16px;height:16px;background:#c6c6c6"></div><div style="left:664px;top:57px;width:16px;height:16px;background:#ebecee"></div><div style="left:680px;top:57px;width:16px;height:16px;background:#c8c8ca"></div><div style="left:696px;top:57px;width:16px;height:16px;background:#a9a7ab"></div><div style="left:712px;top:57px;width:16px;height:16px;background:#d6d7db"></div><div style="left:728px;top:57px;width:16px;height:16px;background:#e3e3e1"></div><div style="left:744px;top:57px;width:16px;height:16px;background:#dededc"></div><div style="left:760px;top:57px;width:16px;height:16px;background:#b8b8b8"></div><div style="left:776px;top:57px;width:16px;height:16px;background:#d8d8d8"></div><div style="left:792px;top:57px;width:16px;height:16px;background:#d5d5d5"></div><div style="left:808px;top:57px;width:16px;height:16px;background:#cacaca"></div><div style="left:824px;top:57px;width:16px;height:16px;background:#cacaca"></div><div style="left:840px;top:57px;width:16px;height:16px;background:#f2f2f2"></div><div style="left:856px;top:57px;width:16px;height:16px;background:#f2f2f2"></div><div style="left:872px;top:57px;width:16px;height:16px;background:#f2f2f2"></div><div style="left:888px;top:57px;width:16px;height:16px;background:#f2f2f2"></div><div style="left:904px;top:57px;width:16px;height:16px;background:#f2f2f2"></div><div style="left:920px;top:57px;width:16px;height:16px;background:#f2f2f2"></div><div style="left:-8px;top:73px;width:16px;height:18px;background:#f8f8f8"></div><div style="left:8px;top:73px;width:16px;height:18px;background:#f8f8f8"></div><div style="left:24px;top:73px;width:16px;height:18px;background:#f8f8f8"></div><div style="left:40px;top:73px;width:16px;height:18px;background:#f8f8f8"></div><div style="left:56px;top:73px;width:16px;height:18px;background:#f8f8f8"></div><div style="left:72px;top:73px;width:16px;height:18px;background:#f8f8f8"></div><div style="left:88px;top:73px;width:16px;height:18px;background:#f8f8f8"></div><div style="left:104px;top:73px;width:16px;height:18px;background:#a6a5ab"></div><div style="left:120px;top:73px;width:16px;height:18px;background:#e3e4e6"></div><div style="left:136px;top:73px;width:16px;height:18px;background:#f6f6f6"></div><div style="left:152px;top:73px;width:16px;height:18px;background:#c2c2c2"></div><div style="left:168px;top:73px;width:16px;height:18px;background:#a8abb8"></div><div style="left:184px;top:73px;width:16px;height:18px;background:#dedede"></div><div style="left:200px;top:73px;width:16px;height:18px;background:#dadada"></div><div style="left:216px;top:73px;width:16px;height:18px;background:#f7f7f7"></div><div style="left:232px;top:73px;width:16px;height:18px;background:#d6cf40"></div><div style="left:248px;top:73px;width:16px;height:18px;background:#d5d3a8"></div><div style="left:264px;top:73px;width:16px;height:18px;background:#e3e3e3"></div><div style="left:280px;top:73px;width:16px;height:18px;background:#e3e3e3"></div><div style="left:296px;top:73px;width:16px;height:18px;background:#e6e6e6"></div><div style="left:312px;top:73px;width:16px;height:18px;background:#e6e6e6"></div><div style="left:328px;top:73px;width:16px;height:18px;background:#e6e6e6"></div><div style="left:344px;top:73px;width:16px;height:18px;background:#aeabb0"></div><div style="left:360px;top:73px;width:16px;height:18px;background:#9b9ca1"></div><div style="left:376px;top:73px;width:16px;height:18px;background:#a1a5ad"></div><div style="left:392px;top:73px;width:16px;height:18px;background:#e8e9ea"></div><div style="left:408px;top:73px;width:16px;height:18px;background:#e5e5e5"></div><div style="left:424px;top:73px;width:16px;height:18px;background:#b6b6b8"></div><div style="left:440px;top:73px;width:16px;height:18px;background:#d8d8dc"></div><div style="left:456px;top:73px;width:16px;height:18px;background:#c3c1c3"></div><div style="left:472px;top:73px;width:16px;height:18px;background:#a2a3a7"></div><div style="left:488px;top:73px;width:16px;height:18px;background:#d8d6d6"></div><div style="left:504px;top:73px;width:16px;height:18px;background:#adabb0"></div><div style="left:520px;top:73px;width:16px;height:18px;background:#a5a4a8"></div><div style="left:536px;top:73px;width:16px;height:18px;background:#a7a8ab"></div><div style="left:552px;top:73px;width:16px;height:18px;background:#c6c6c8"></div><div style="left:568px;top:73px;width:16px;height:18px;background:#e3e3e3"></div><div style="left:584px;top:73px;width:16px;height:18px;background:#f6f6f6"></div><div style="left:600px;top:73px;width:16px;height:18px;background:#dcdcdc"></div><div style="left:616px;top:73px;width:16px;height:18px;background:#b6b4ba"></div><div style="left:632px;top:73px;width:16px;height:18px;background:#e0e0e0"></div><div style="left:648px;top:73px;width:16px;height:18px;background:#cccccc"></div><div style="left:664px;top:73px;width:16px;height:18px;background:#f8f8f8"></div><div style="left:680px;top:73px;width:16px;height:18px;background:#e3e3e3"></div><div style="left:696px;top:73px;width:16px;height:18px;background:#d3d3d3"></div><div style="left:712px;top:73px;width:16px;height:18px;background:#f6f6f6"></div><div style="left:728px;top:73px;width:16px;height:18px;background:#e6e6e6"></div><div style="left:744px;top:73px;width:16px;height:18px;background:#e6e6e6"></div><div style="left:760px;top:73px;width:16px;height:18px;background:#d0d0d0"></div><div style="left:776px;top:73px;width:16px;height:18px;background:#e3e3e3"></div><div style="left:792px;top:73px;width:16px;height:18px;background:#e3e3e3"></div><div style="left:808px;top:73px;width:16px;height:18px;background:#d3d3d3"></div><div style="left:824px;top:73px;width:16px;height:18px;background:#e3e3e3"></div><div style="left:840px;top:73px;width:16px;height:18px;background:#f8f8f8"></div><div style="left:856px;top:73px;width:16px;height:18px;background:#f8f8f8"></div><div style="left:872px;top:73px;width:16px;height:18px;background:#f8f8f8"></div><div style="left:888px;top:73px;width:16px;height:18px;background:#f8f8f8"></div><div style="left:904px;top:73px;width:16px;height:18px;background:#f8f8f8"></div><div style="left:920px;top:73px;width:16px;height:18px;background:#f8f8f8"></div></div>
<div style="left:985px;top:1147px;width:43px;height:91px;background:linear-gradient(#c4c4c4,#fafafa);"></div>
<svg style="position:absolute;left:7px;top:1115px;" width="12" height="18" viewBox="0 0 12 18"><path d="M1 1 L11 8.5 L1 16 Z" fill="#a8a8a8"/></svg>
<div style="left:55px;top:247px;width:1261px;height:901px;border-radius:9px;background:#f0f0f0;background-clip:padding-box;border:1px solid rgba(100,100,100,0.55);overflow:hidden;"><div style="left:0;top:0;width:1261px;height:44px;background:#f3f3f3;"></div></div>
<div class="t" style="left:68.8px;top:260.06px;font-size:18px;color:#8b8b8b;transform:scaleX(0.9772);">Drucken</div>
<svg style="position:absolute;left:1281px;top:259px;" width="20" height="20" viewBox="0 0 20 20"><path d="M2 2 L18 18 M18 2 L2 18" stroke="#8a8a8a" stroke-width="1.5"/></svg>
<div style="left:63px;top:309px;width:1247px;height:109px;background:transparent;border:1px solid #dadada;"></div>
<div style="left:63px;top:425px;width:747px;height:121px;background:transparent;border:1px solid #dadada;"></div>
<div style="left:63px;top:553px;width:747px;height:234px;background:transparent;border:1px solid #dadada;"></div>
<div style="left:63px;top:794px;width:747px;height:86px;background:transparent;border:1px solid #dadada;"></div>
<div style="left:63px;top:887px;width:747px;height:104px;background:transparent;border:1px solid #dadada;"></div>
<div style="left:812px;top:425px;width:498px;height:631px;background:transparent;border:1px solid #dadada;"></div>
<div style="left:71px;top:316px;width:77px;height:35px;background:#f0f030;"></div>
<div class="t" style="left:86.5px;top:324.32px;font-size:19px;color:#000;transform:scaleX(0.8636);">Drucker:</div>
<div style="left:151px;top:308px;width:446.8px;height:43px;background:#fff;border:6px solid #ff0000;box-shadow:3px 3px 5px rgba(0,0,0,0.45);"></div>
<div style="left:561px;top:314px;width:29px;height:31px;background:#f6f6f6;"></div>
<div class="t" style="left:158px;top:321.02px;font-size:19px;color:#000;transform:scaleX(0.9418);">Microsoft Print to PDF</div>
<svg style="position:absolute;left:570px;top:326.3px;" width="13" height="9" viewBox="0 0 13 9"><path d="M1 1.5 L6.5 7 L12 1.5" fill="none" stroke="#444" stroke-width="1.2"/></svg>
<div style="left:596px;top:313px;width:144px;height:42px;background:#fdfdfd;border:1px solid #d2d2d2;border-radius:4px;border-bottom-color:#c2c2c2;"></div>
<div class="t" style="left:613.5px;top:325.32px;font-size:19px;color:#000;transform:scaleX(0.8969);">Eigenschaften</div>
<div style="left:746px;top:313px;width:141px;height:42px;background:#fdfdfd;border:1px solid #d2d2d2;border-radius:4px;border-bottom-color:#c2c2c2;"></div>
<div class="t" style="left:776.8px;top:325.32px;font-size:19px;color:#000;transform:scaleX(0.8646);">Erweitert...</div>
<div style="left:576.9px;top:286.7px;width:36.3px;height:31.2px;border-radius:50%;background:#8b0000;"></div>
<div class="t" style="left:587.3px;top:289.62px;font-size:26.2px;color:#fff;font-weight:700;transform:scaleX(0.9745);">1</div>
<div class="t" style="left:1222px;top:316.72px;font-size:19px;color:#0000ee;transform:scaleX(0.9471);text-decoration:underline;">Hilfe</div>
<svg style="position:absolute;left:1264px;top:312.3px;" width="23" height="23" viewBox="0 0 23 23"><circle cx="11.5" cy="11.5" r="9.6" fill="none" stroke="#7a7a7a" stroke-width="2"/><path d="M8.6 9 C8.6 6.8 10 6 11.6 6 C13.3 6 14.6 7 14.6 8.7 C14.6 10.8 11.8 11 11.8 13.5" fill="none" stroke="#7a7a7a" stroke-width="1.9"/><circle cx="11.8" cy="16.6" r="1.2" fill="#7a7a7a"/></svg>
<div class="t" style="left:86px;top:375.72px;font-size:19px;color:#000;transform:scaleX(0.8668);">Exemplare:</div>
<div style="left:177px;top:366px;width:68px;height:37px;background:#fff;border-style:solid;border-width:2px 1px 1px 2px;border-color:#6d6d6d #e6e6e6 #e6e6e6 #6d6d6d;"></div>
<div class="t" style="left:182px;top:372.52px;font-size:19px;color:#000;transform:scaleX(0.6624);">1</div>
<div style="left:248px;top:367px;width:24px;height:17px;background:#e5e5e5;border:1px solid #adadad;"></div>
<div style="left:248px;top:385px;width:24px;height:18px;background:#e5e5e5;border:1px solid #adadad;"></div>
<svg style="position:absolute;left:254px;top:371px;" width="12" height="8" viewBox="0 0 12 8"><path d="M0.5 7 L6 1 L11.5 7Z" fill="#000"/></svg>
<svg style="position:absolute;left:254px;top:390px;" width="12" height="8" viewBox="0 0 12 8"><path d="M0.5 1 L6 7 L11.5 1Z" fill="#000"/></svg>
<div style="left:603px;top:375px;width:20px;height:20px;background:#f2f2f2;border:1px solid #5a5a5a;border-radius:3px;"></div>
<div class="t" style="left:629px;top:375.42px;font-size:19px;color:#000;transform:scaleX(0.9058);">In Graustufen (schwarzweiß) drucken</div>
<div style="left:953px;top:375px;width:20px;height:20px;background:#f2f2f2;border:1px solid #5a5a5a;border-radius:3px;"></div>
<div class="t" style="left:978.6px;top:375.72px;font-size:19px;color:#000;transform:scaleX(0.9046);">Farbe/Toner sparen</div>
<svg style="position:absolute;left:1167px;top:371px;" width="23" height="23" viewBox="0 0 23 23"><circle cx="11.5" cy="11.5" r="9.6" fill="none" stroke="#7a7a7a" stroke-width="2"/><circle cx="11.5" cy="6.8" r="1.4" fill="#7a7a7a"/><path d="M9.3 9.5 H12.5 V16 M9.3 16.5 H14" fill="none" stroke="#7a7a7a" stroke-width="2"/></svg>
<div class="t" style="left:85px;top:438.62px;font-size:19px;color:#000;font-weight:700;transform:scaleX(0.9327);">Zu druckende Seiten</div>
<div style="left:85px;top:473px;width:20px;height:20px;border-radius:50%;background:#005fb8;"></div>
<div style="left:91px;top:479px;width:8px;height:8px;border-radius:50%;background:#fff;"></div>
<div class="t" style="left:110px;top:473.62px;font-size:19px;color:#000;transform:scaleX(0.8996);">Alle</div>
<div style="left:214px;top:473px;width:20px;height:20px;border-radius:50%;background:#f7f7f7;border:1px solid #5a5a5a;"></div>
<div class="t" style="left:239.3px;top:473.62px;font-size:19px;color:#000;transform:scaleX(0.9469);">Aktuell</div>
<div style="left:349px;top:473px;width:20px;height:20px;border-radius:50%;background:#f7f7f7;border:1px solid #5a5a5a;"></div>
<div class="t" style="left:374.2px;top:473.62px;font-size:19px;color:#000;transform:scaleX(0.8817);">Seiten</div>
<div style="left:464px;top:464px;width:250px;height:38px;background:#f0f0f0;border-style:solid;border-width:2px 1px 1px 2px;border-color:#6d6d6d #fff #fff #6d6d6d;"></div>
<div class="t" style="left:467.5px;top:470.52px;font-size:19px;color:#8a8a8a;transform:scaleX(0.9674);">1 - 20</div>
<svg style="position:absolute;left:92px;top:510px;" width="10" height="14" viewBox="0 0 10 14"><path d="M1 1 L9 7 L1 13Z" fill="#222"/></svg>
<div class="t" style="left:109.3px;top:509.52px;font-size:19px;color:#000;transform:scaleX(0.9355);">Weitere Optionen</div>
<div class="t" style="left:85.4px;top:569.82px;font-size:19px;color:#000;font-weight:700;transform:scaleX(0.9285);">Seite anpassen und Optionen</div>
<svg style="position:absolute;left:338px;top:567px;" width="23" height="23" viewBox="0 0 23 23"><circle cx="11.5" cy="11.5" r="9.6" fill="none" stroke="#7a7a7a" stroke-width="2"/><circle cx="11.5" cy="6.8" r="1.4" fill="#7a7a7a"/><path d="M9.3 9.5 H12.5 V16 M9.3 16.5 H14" fill="none" stroke="#7a7a7a" stroke-width="2"/></svg>
<div style="left:86px;top:596px;width:148px;height:46px;background:#fdfdfd;border:1px solid #d2d2d2;border-radius:4px;border-bottom-color:#c2c2c2;"></div>
<div class="t" style="left:136px;top:609.72px;font-size:19px;color:#000;transform:scaleX(0.8877);">Größe</div>
<div style="left:136px;top:630px;width:13px;height:1px;background:#000;"></div>
<div style="left:240px;top:596px;width:148px;height:46px;background:#fdfdfd;border:1px solid #d2d2d2;border-radius:4px;border-bottom-color:#c2c2c2;"></div>
<div class="t" style="left:289.6px;top:609.72px;font-size:19px;color:#000;transform:scaleX(0.8741);">Poster</div>
<div style="left:394px;top:596px;width:148px;height:46px;background:#fdfdfd;border:1px solid #d2d2d2;border-radius:4px;border-bottom-color:#c2c2c2;"></div>
<div class="t" style="left:435.7px;top:609.72px;font-size:19px;color:#000;transform:scaleX(0.9046);">Mehrere</div>
<div style="left:548px;top:596px;width:148px;height:46px;background:#fdfdfd;border:1px solid #d2d2d2;border-radius:4px;border-bottom-color:#c2c2c2;"></div>
<div class="t" style="left:583.9px;top:609.72px;font-size:19px;color:#000;transform:scaleX(0.8823);">Broschüre</div>
<div style="left:85px;top:662px;width:20px;height:20px;border-radius:50%;background:#f7f7f7;border:1px solid #5a5a5a;"></div>
<div class="t" style="left:110.5px;top:661.92px;font-size:19px;color:#000;transform:scaleX(0.8638);">Anpassen</div>
<div style="left:380px;top:662px;width:20px;height:20px;border-radius:50%;background:#f7f7f7;border:1px solid #5a5a5a;"></div>
<div class="t" style="left:405.4px;top:662.22px;font-size:19px;color:#000;transform:scaleX(0.8798);">Tatsächliche Größe</div>
<div style="left:85px;top:700px;width:20px;height:20px;border-radius:50%;background:#005fb8;"></div>
<div style="left:91px;top:706px;width:8px;height:8px;border-radius:50%;background:#fff;"></div>
<div class="t" style="left:110.7px;top:700.32px;font-size:19px;color:#000;transform:scaleX(0.9126);">Übergroße Seiten verkleinern</div>
<div style="left:380px;top:700.5px;width:20px;height:20px;border-radius:50%;background:#f7f7f7;border:1px solid #5a5a5a;"></div>
<div class="t" style="left:405.4px;top:700.62px;font-size:19px;color:#000;transform:scaleX(0.9204);">Benutzerdefinierter Maßstab:</div>
<div style="left:673px;top:691px;width:95px;height:37px;background:#f0f0f0;border-style:solid;border-width:2px 1px 1px 2px;border-color:#6d6d6d #fff #fff #6d6d6d;"></div>
<div class="t" style="left:677px;top:697.72px;font-size:19px;color:#8a8a8a;transform:scaleX(0.9148);">100</div>
<div class="t" style="left:773.6px;top:700.62px;font-size:19px;color:#000;transform:scaleX(0.8524);">%</div>
<div style="left:85px;top:746px;width:20px;height:20px;background:#f2f2f2;border:1px solid #5a5a5a;border-radius:3px;"></div>
<div class="t" style="left:110.7px;top:746.02px;font-size:19px;color:#000;transform:scaleX(0.9056);">Papierquelle gemäß PDF-Seitengröße auswählen</div>
<div class="t" style="left:85.6px;top:807.82px;font-size:19px;color:#000;transform:scaleX(0.9279);">Ausrichtung:</div>
<div style="left:85px;top:838px;width:20px;height:20px;border-radius:50%;background:#005fb8;"></div>
<div style="left:91px;top:844px;width:8px;height:8px;border-radius:50%;background:#fff;"></div>
<div class="t" style="left:110.3px;top:838.52px;font-size:19px;color:#000;transform:scaleX(0.9850);">Auto</div>
<div style="left:210px;top:838px;width:20px;height:20px;border-radius:50%;background:#f7f7f7;border:1px solid #5a5a5a;"></div>
<div class="t" style="left:235.8px;top:838.52px;font-size:19px;color:#000;transform:scaleX(0.9674);">Hochformat</div>
<div style="left:387px;top:838px;width:20px;height:20px;border-radius:50%;background:#f7f7f7;border:1px solid #5a5a5a;"></div>
<div class="t" style="left:412.7px;top:838.52px;font-size:19px;color:#000;transform:scaleX(0.9575);">Querformat</div>
<div class="t" style="left:85.6px;top:900.32px;font-size:19px;color:#000;font-weight:700;transform:scaleX(0.9362);">Kommentare und Formulare</div>
<div style="left:85px;top:927px;width:390px;height:34px;background:#fff;border:1px solid #cfcfcf;border-bottom-color:#b5b5b5;"></div>
<div style="left:445px;top:928px;width:29px;height:32px;background:#f8f8f8;"></div>
<div class="t" style="left:90.8px;top:935.02px;font-size:19px;color:#000;transform:scaleX(0.9485);">Dokument und Markierungen</div>
<svg style="position:absolute;left:455px;top:939px;" width="13" height="9" viewBox="0 0 13 9"><path d="M1 1.5 L6.5 7 L12 1.5" fill="none" stroke="#444" stroke-width="1.2"/></svg>
<div style="left:480px;top:927px;width:279px;height:42px;background:#fdfdfd;border:1px solid #d2d2d2;border-radius:4px;border-bottom-color:#c2c2c2;"></div>
<div class="t" style="left:498px;top:937.72px;font-size:19px;color:#000;transform:scaleX(0.9211);">Kommentare zusammenfassen</div>
<div style="left:64px;top:1067px;width:167px;height:41px;background:#fdfdfd;border:1px solid #d2d2d2;border-radius:4px;border-bottom-color:#c2c2c2;"></div>
<div class="t" style="left:81.8px;top:1079.02px;font-size:19px;color:#000;transform:scaleX(0.8937);">Seite einrichten...</div>
<div class="t" style="left:839.4px;top:428.72px;font-size:19px;color:#000;transform:scaleX(0.9065);white-space:pre;">Skalierung:  94 %</div>
<div class="t" style="left:885.2px;top:470.52px;font-size:19px;color:#000;transform:scaleX(0.9337);">215.9 x 279.4 mm</div>
<div style="left:883px;top:500px;width:355px;height:457px;background:#fff;border:2px solid #000;"></div>
<div style="left:835px;top:973px;width:46px;height:42px;background:#fdfdfd;border:1px solid #d2d2d2;border-radius:4px;border-bottom-color:#c2c2c2;"></div>
<div class="t" style="left:853.5px;top:984.52px;font-size:19px;color:#000;transform:scaleX(0.8111);">&lt;</div>
<div style="left:1241px;top:973px;width:46px;height:42px;background:#fdfdfd;border:1px solid #d2d2d2;border-radius:4px;border-bottom-color:#c2c2c2;"></div>
<div class="t" style="left:1259.5px;top:984.52px;font-size:19px;color:#000;transform:scaleX(0.8111);">&gt;</div>
<div style="left:929px;top:984px;width:266px;height:6px;background:#e4e7e7;border:1px solid #cfd3d3;border-radius:2px;"></div>
<svg style="position:absolute;left:928px;top:973px;" width="17" height="30" viewBox="0 0 17 30"><path d="M0.8 0.8 H16.2 V21.3 L8.5 29.2 L0.8 21.3 Z" fill="#0072d0"/></svg>
<div class="t" style="left:1003.8px;top:1023.82px;font-size:19px;color:#000;transform:scaleX(0.9302);">Seite 1 von 20</div>
<div style="left:1012px;top:1067px;width:141px;height:42px;background:#fdfdfd;border:1px solid #d2d2d2;border-radius:4px;border-bottom-color:#c2c2c2;"></div>
<div style="left:1027px;top:1073px;width:102px;height:33px;background:#ffff33;"></div>
<div class="t" style="left:1050.6px;top:1079.02px;font-size:19px;color:#000;transform:scaleX(0.9074);">Drucken</div>
<div style="left:1165px;top:1067px;width:141px;height:42px;background:#fdfdfd;border:1px solid #d2d2d2;border-radius:4px;border-bottom-color:#c2c2c2;"></div>
<div class="t" style="left:1192.7px;top:1079.02px;font-size:19px;color:#000;transform:scaleX(0.9195);">Abbrechen</div>
<div style="left:1138.9px;top:1046.6px;width:39.3px;height:34.5px;border-radius:50%;background:#8b0000;"></div>
<div class="t" style="left:1150.6px;top:1049.44px;font-size:27.6px;color:#fff;font-weight:700;transform:scaleX(1.0424);">2</div>
<div style="left:883px;top:500px;width:355px;height:457px;overflow:hidden;"><div style="left:39px;top:30px;width:16px;height:16px;background:#fcfcfc"></div><div style="left:87px;top:30px;width:16px;height:16px;background:#fdfdfd"></div><div style="left:119px;top:30px;width:16px;height:16px;background:#f7f7f7"></div><div style="left:135px;top:30px;width:16px;height:16px;background:#f3f4f6"></div><div style="left:151px;top:30px;width:16px;height:16px;background:#f5f6f6"></div><div style="left:167px;top:30px;width:16px;height:16px;background:#f6f6f7"></div><div style="left:183px;top:30px;width:16px;height:16px;background:#f4f5f7"></div><div style="left:215px;top:30px;width:16px;height:16px;background:#e6e7e9"></div><div style="left:231px;top:30px;width:16px;height:16px;background:#f8faf9"></div><div style="left:247px;top:30px;width:16px;height:16px;background:#f4f4f4"></div><div style="left:263px;top:30px;width:16px;height:16px;background:#ead5d5"></div><div style="left:279px;top:30px;width:16px;height:16px;background:#e0e1e4"></div><div style="left:295px;top:30px;width:16px;height:16px;background:#e3e3d2"></div><div style="left:39px;top:46px;width:16px;height:16px;background:#fcfcfc"></div><div style="left:119px;top:46px;width:16px;height:16px;background:#f6f7f6"></div><div style="left:135px;top:46px;width:16px;height:16px;background:#fbfcfb"></div><div style="left:215px;top:46px;width:16px;height:16px;background:#e3e4e6"></div><div style="left:231px;top:46px;width:16px;height:16px;background:#f1f3f2"></div><div style="left:247px;top:46px;width:16px;height:16px;background:#e9eaeb"></div><div style="left:263px;top:46px;width:16px;height:16px;background:#ebc8c8"></div><div style="left:279px;top:46px;width:16px;height:16px;background:#e7e8ea"></div><div style="left:295px;top:46px;width:16px;height:16px;background:#e1dfc2"></div><div style="left:39px;top:62px;width:16px;height:16px;background:#fcfcfc"></div><div style="left:87px;top:62px;width:16px;height:16px;background:#fcfcfc"></div><div style="left:119px;top:62px;width:16px;height:16px;background:#f3f4f3"></div><div style="left:215px;top:62px;width:16px;height:16px;background:#e2e3e5"></div><div style="left:231px;top:62px;width:16px;height:16px;background:#e6e7e9"></div><div style="left:247px;top:62px;width:16px;height:16px;background:#e7e8ea"></div><div style="left:263px;top:62px;width:16px;height:16px;background:#eacaca"></div><div style="left:279px;top:62px;width:16px;height:16px;background:#dcdfe0"></div><div style="left:295px;top:62px;width:16px;height:16px;background:#dfdcc2"></div><div style="left:23px;top:78px;width:16px;height:16px;background:#fcfcfc"></div><div style="left:119px;top:78px;width:16px;height:16px;background:#f4f5f4"></div><div style="left:215px;top:78px;width:16px;height:16px;background:#e2e3e5"></div><div style="left:231px;top:78px;width:16px;height:16px;background:#e8e9ea"></div><div style="left:247px;top:78px;width:16px;height:16px;background:#dcdde0"></div><div style="left:263px;top:78px;width:16px;height:16px;background:#e8caca"></div><div style="left:279px;top:78px;width:16px;height:16px;background:#dedecf"></div><div style="left:295px;top:78px;width:16px;height:16px;background:#e1dfca"></div><div style="left:23px;top:94px;width:16px;height:16px;background:#fcfcfc"></div><div style="left:39px;top:94px;width:16px;height:16px;background:#f2f2f2"></div><div style="left:119px;top:94px;width:16px;height:16px;background:#eeeff0"></div><div style="left:135px;top:94px;width:16px;height:16px;background:#f9f9f9"></div><div style="left:183px;top:94px;width:16px;height:16px;background:#f3f3f3"></div><div style="left:199px;top:94px;width:16px;height:16px;background:#fafafa"></div><div style="left:215px;top:94px;width:16px;height:16px;background:#e0e1e3"></div><div style="left:231px;top:94px;width:16px;height:16px;background:#dfe0e2"></div><div style="left:247px;top:94px;width:16px;height:16px;background:#dcdde0"></div><div style="left:263px;top:94px;width:16px;height:16px;background:#e8c9c9"></div><div style="left:279px;top:94px;width:16px;height:16px;background:#e6e6dd"></div><div style="left:295px;top:94px;width:16px;height:16px;background:#e6e6df"></div><div style="left:39px;top:110px;width:16px;height:16px;background:#e9dcdc"></div><div style="left:55px;top:110px;width:16px;height:16px;background:#fcf6f5"></div><div style="left:119px;top:110px;width:16px;height:16px;background:#efefef"></div><div style="left:135px;top:110px;width:16px;height:16px;background:#f9f9f9"></div><div style="left:151px;top:110px;width:16px;height:16px;background:#f3f3f3"></div><div style="left:167px;top:110px;width:16px;height:16px;background:#e8e9eb"></div><div style="left:183px;top:110px;width:16px;height:16px;background:#e5e6e7"></div><div style="left:215px;top:110px;width:16px;height:16px;background:#dfe0e2"></div><div style="left:231px;top:110px;width:16px;height:16px;background:#e0e1e2"></div><div style="left:247px;top:110px;width:16px;height:16px;background:#dadbdd"></div><div style="left:263px;top:110px;width:16px;height:16px;background:#e9c5c5"></div><div style="left:279px;top:110px;width:16px;height:16px;background:#eaebf1"></div><div style="left:295px;top:110px;width:16px;height:16px;background:#dcdde2"></div><div style="left:39px;top:126px;width:16px;height:16px;background:#f5f5f5"></div><div style="left:119px;top:126px;width:16px;height:16px;background:#ebdfe1"></div><div style="left:135px;top:126px;width:16px;height:16px;background:#f8f8f8"></div><div style="left:151px;top:126px;width:16px;height:16px;background:#e6e7e9"></div><div style="left:167px;top:126px;width:16px;height:16px;background:#e9eaeb"></div><div style="left:183px;top:126px;width:16px;height:16px;background:#e3e4e5"></div><div style="left:199px;top:126px;width:16px;height:16px;background:#fbf0ef"></div><div style="left:215px;top:126px;width:16px;height:16px;background:#dfe0e2"></div><div style="left:231px;top:126px;width:16px;height:16px;background:#dedfe0"></div><div style="left:247px;top:126px;width:16px;height:16px;background:#dadbdd"></div><div style="left:263px;top:126px;width:16px;height:16px;background:#e8c4c4"></div><div style="left:279px;top:126px;width:16px;height:16px;background:#dcdde2"></div><div style="left:295px;top:126px;width:16px;height:16px;background:#dfe0e5"></div><div style="left:39px;top:142px;width:16px;height:16px;background:#fafafa"></div><div style="left:55px;top:142px;width:16px;height:16px;background:#fafafa"></div><div style="left:71px;top:142px;width:16px;height:16px;background:#fafafa"></div><div style="left:87px;top:142px;width:16px;height:16px;background:#fafafa"></div><div style="left:103px;top:142px;width:16px;height:16px;background:#fafafa"></div><div style="left:119px;top:142px;width:16px;height:16px;background:#f8f6f7"></div><div style="left:135px;top:142px;width:16px;height:16px;background:#f8f7f8"></div><div style="left:151px;top:142px;width:16px;height:16px;background:#f8f7f8"></div><div style="left:167px;top:142px;width:16px;height:16px;background:#f8f7f8"></div><div style="left:183px;top:142px;width:16px;height:16px;background:#f8f7f8"></div><div style="left:199px;top:142px;width:16px;height:16px;background:#fbf9f6"></div><div style="left:215px;top:142px;width:16px;height:16px;background:#f8f8f8"></div><div style="left:231px;top:142px;width:16px;height:16px;background:#f9f9f9"></div><div style="left:247px;top:142px;width:16px;height:16px;background:#f7f7f7"></div><div style="left:263px;top:142px;width:16px;height:16px;background:#fbf3f2"></div><div style="left:279px;top:142px;width:16px;height:16px;background:#f8f8f8"></div><div style="left:295px;top:142px;width:16px;height:16px;background:#fafafa"></div><div style="left:23px;top:158px;width:16px;height:16px;background:#fafafa"></div><div style="left:55px;top:158px;width:16px;height:16px;background:#fbfbfb"></div><div style="left:71px;top:158px;width:16px;height:16px;background:#e2e3e5"></div><div style="left:119px;top:158px;width:16px;height:16px;background:#f3f3f5"></div><div style="left:135px;top:158px;width:16px;height:16px;background:#ececee"></div><div style="left:151px;top:158px;width:16px;height:16px;background:#f1f1f3"></div><div style="left:167px;top:158px;width:16px;height:16px;background:#f2f2f4"></div><div style="left:183px;top:158px;width:16px;height:16px;background:#eeeef1"></div><div style="left:199px;top:158px;width:16px;height:16px;background:#f0f0f3"></div><div style="left:215px;top:158px;width:16px;height:16px;background:#f4f4f6"></div><div style="left:231px;top:158px;width:16px;height:16px;background:#f5f5f6"></div><div style="left:247px;top:158px;width:16px;height:16px;background:#ededf2"></div><div style="left:71px;top:174px;width:16px;height:16px;background:#c9c8cd"></div><div style="left:87px;top:174px;width:16px;height:16px;background:#f7f7f7"></div><div style="left:103px;top:174px;width:16px;height:16px;background:#f7f7f7"></div><div style="left:119px;top:174px;width:16px;height:16px;background:#ecebf0"></div><div style="left:135px;top:174px;width:16px;height:16px;background:#eaeaee"></div><div style="left:151px;top:174px;width:16px;height:16px;background:#efeff2"></div><div style="left:167px;top:174px;width:16px;height:16px;background:#efeff1"></div><div style="left:183px;top:174px;width:16px;height:16px;background:#e3e2e8"></div><div style="left:199px;top:174px;width:16px;height:16px;background:#e0dfe5"></div><div style="left:215px;top:174px;width:16px;height:16px;background:#f4f4f6"></div><div style="left:231px;top:174px;width:16px;height:16px;background:#f4f4f6"></div><div style="left:247px;top:174px;width:16px;height:16px;background:#f3f3f5"></div><div style="left:71px;top:190px;width:16px;height:16px;background:#cbcbcd"></div><div style="left:103px;top:190px;width:16px;height:16px;background:#f3f3f4"></div><div style="left:119px;top:190px;width:16px;height:16px;background:#e8e7ec"></div><div style="left:135px;top:190px;width:16px;height:16px;background:#e7e6eb"></div><div style="left:151px;top:190px;width:16px;height:16px;background:#efeff2"></div><div style="left:167px;top:190px;width:16px;height:16px;background:#efeff1"></div><div style="left:183px;top:190px;width:16px;height:16px;background:#f3f3f5"></div><div style="left:199px;top:190px;width:16px;height:16px;background:#c7c6d0"></div><div style="left:215px;top:190px;width:16px;height:16px;background:#ebebf0"></div><div style="left:231px;top:190px;width:16px;height:16px;background:#f2f2f5"></div><div style="left:247px;top:190px;width:16px;height:16px;background:#f2f2f5"></div><div style="left:71px;top:206px;width:16px;height:16px;background:#cecdd2"></div><div style="left:103px;top:206px;width:16px;height:16px;background:#f4f4f5"></div><div style="left:119px;top:206px;width:16px;height:16px;background:#e8e7ec"></div><div style="left:135px;top:206px;width:16px;height:16px;background:#e8e7ec"></div><div style="left:151px;top:206px;width:16px;height:16px;background:#f3f3f5"></div><div style="left:167px;top:206px;width:16px;height:16px;background:#f1f1f3"></div><div style="left:183px;top:206px;width:16px;height:16px;background:#f2f2f4"></div><div style="left:199px;top:206px;width:16px;height:16px;background:#d6d6db"></div><div style="left:215px;top:206px;width:16px;height:16px;background:#d3d3d8"></div><div style="left:231px;top:206px;width:16px;height:16px;background:#efeef3"></div><div style="left:247px;top:206px;width:16px;height:16px;background:#efeef3"></div><div style="left:103px;top:222px;width:16px;height:16px;background:#f7f7f8"></div><div style="left:119px;top:222px;width:16px;height:16px;background:#f2f2f4"></div><div style="left:135px;top:222px;width:16px;height:16px;background:#efeff2"></div><div style="left:151px;top:222px;width:16px;height:16px;background:#efeff2"></div><div style="left:167px;top:222px;width:16px;height:16px;background:#f4f4f6"></div><div style="left:183px;top:222px;width:16px;height:16px;background:#f3f3f5"></div><div style="left:199px;top:222px;width:16px;height:16px;background:#f1f1f4"></div><div style="left:215px;top:222px;width:16px;height:16px;background:#c0bdca"></div><div style="left:231px;top:222px;width:16px;height:16px;background:#d8d8de"></div><div style="left:247px;top:222px;width:16px;height:16px;background:#ebeaf0"></div><div style="left:183px;top:238px;width:16px;height:16px;background:#fcfcfc"></div><div style="left:199px;top:238px;width:16px;height:16px;background:#f6f6f8"></div><div style="left:215px;top:238px;width:16px;height:16px;background:#e3e2e8"></div><div style="left:231px;top:238px;width:16px;height:16px;background:#c5c3cf"></div><div style="left:247px;top:238px;width:16px;height:16px;background:#d6d6e0"></div><div style="left:39px;top:254px;width:16px;height:16px;background:#f3f3f3"></div><div style="left:55px;top:254px;width:16px;height:16px;background:#f3f3f3"></div><div style="left:71px;top:254px;width:16px;height:16px;background:#dcdcde"></div><div style="left:87px;top:254px;width:16px;height:16px;background:#e8e8e8"></div><div style="left:103px;top:254px;width:16px;height:16px;background:#e8e8e8"></div><div style="left:119px;top:254px;width:16px;height:16px;background:#e8e8e8"></div><div style="left:135px;top:254px;width:16px;height:16px;background:#ccccce"></div><div style="left:151px;top:254px;width:16px;height:16px;background:#ededed"></div><div style="left:167px;top:254px;width:16px;height:16px;background:#d1d1d3"></div><div style="left:183px;top:254px;width:16px;height:16px;background:#cdcdcf"></div><div style="left:199px;top:254px;width:16px;height:16px;background:#dedede"></div><div style="left:215px;top:254px;width:16px;height:16px;background:#e8e8e8"></div><div style="left:231px;top:254px;width:16px;height:16px;background:#e8e8e8"></div><div style="left:247px;top:254px;width:16px;height:16px;background:#e8e8e8"></div><div style="left:263px;top:254px;width:16px;height:16px;background:#e8e8e8"></div><div style="left:279px;top:254px;width:16px;height:16px;background:#e8e8e8"></div><div style="left:39px;top:270px;width:16px;height:16px;background:#d3d2d8"></div><div style="left:55px;top:270px;width:16px;height:16px;background:#f5f5f5"></div><div style="left:71px;top:270px;width:16px;height:16px;background:#d0d0d2"></div><div style="left:87px;top:270px;width:16px;height:16px;background:#d3d1b9"></div><div style="left:103px;top:270px;width:16px;height:16px;background:#bbb89d"></div><div style="left:119px;top:270px;width:16px;height:16px;background:#d6d7da"></div><div style="left:135px;top:270px;width:16px;height:16px;background:#bfc0c3"></div><div style="left:151px;top:270px;width:16px;height:16px;background:#ededed"></div><div style="left:167px;top:270px;width:16px;height:16px;background:#d5d5d6"></div><div style="left:183px;top:270px;width:16px;height:16px;background:#c9c9cb"></div><div style="left:199px;top:270px;width:16px;height:16px;background:#dadada"></div><div style="left:215px;top:270px;width:16px;height:16px;background:#e3e3e3"></div><div style="left:231px;top:270px;width:16px;height:16px;background:#e3e3e3"></div><div style="left:247px;top:270px;width:16px;height:16px;background:#cbcbcf"></div><div style="left:263px;top:270px;width:16px;height:16px;background:#c3c3c7"></div><div style="left:279px;top:270px;width:16px;height:16px;background:#d1d1d3"></div><div style="left:39px;top:286px;width:16px;height:16px;background:#ceccd5"></div><div style="left:55px;top:286px;width:16px;height:16px;background:#e8e8e8"></div><div style="left:71px;top:286px;width:16px;height:16px;background:#d1d1d3"></div><div style="left:87px;top:286px;width:16px;height:16px;background:#e4e1ba"></div><div style="left:103px;top:286px;width:16px;height:16px;background:#dddbba"></div><div style="left:119px;top:286px;width:16px;height:16px;background:#e3e3e3"></div><div style="left:135px;top:286px;width:16px;height:16px;background:#bdbcc2"></div><div style="left:151px;top:286px;width:16px;height:16px;background:#ededed"></div><div style="left:167px;top:286px;width:16px;height:16px;background:#cbcbcd"></div><div style="left:183px;top:286px;width:16px;height:16px;background:#c4c4c6"></div><div style="left:199px;top:286px;width:16px;height:16px;background:#dcdcdc"></div><div style="left:215px;top:286px;width:16px;height:16px;background:#e5e5e5"></div><div style="left:231px;top:286px;width:16px;height:16px;background:#e5e5e5"></div><div style="left:247px;top:286px;width:16px;height:16px;background:#e5e5e5"></div><div style="left:263px;top:286px;width:16px;height:16px;background:#dedede"></div><div style="left:279px;top:286px;width:16px;height:16px;background:#dedede"></div><div style="left:39px;top:302px;width:16px;height:16px;background:#cecdd6"></div><div style="left:55px;top:302px;width:16px;height:16px;background:#e6e6e6"></div><div style="left:71px;top:302px;width:16px;height:16px;background:#d0d1d5"></div><div style="left:87px;top:302px;width:16px;height:16px;background:#dddba5"></div><div style="left:103px;top:302px;width:16px;height:16px;background:#dcdcd0"></div><div style="left:119px;top:302px;width:16px;height:16px;background:#e5e5e5"></div><div style="left:135px;top:302px;width:16px;height:16px;background:#bbbbc1"></div><div style="left:151px;top:302px;width:16px;height:16px;background:#ededed"></div><div style="left:167px;top:302px;width:16px;height:16px;background:#cfced3"></div><div style="left:183px;top:302px;width:16px;height:16px;background:#bebdc3"></div><div style="left:199px;top:302px;width:16px;height:16px;background:#dcdcdc"></div><div style="left:215px;top:302px;width:16px;height:16px;background:#dfdfe3"></div><div style="left:231px;top:302px;width:16px;height:16px;background:#e6e6e6"></div><div style="left:247px;top:302px;width:16px;height:16px;background:#e6e6e6"></div><div style="left:263px;top:302px;width:16px;height:16px;background:#dadada"></div><div style="left:279px;top:302px;width:16px;height:16px;background:#dedede"></div><div style="left:39px;top:318px;width:16px;height:16px;background:#f9f9f9"></div><div style="left:55px;top:318px;width:16px;height:16px;background:#d8d8da"></div><div style="left:71px;top:318px;width:16px;height:16px;background:#cfd0d4"></div><div style="left:87px;top:318px;width:16px;height:16px;background:#d4d0a6"></div><div style="left:103px;top:318px;width:16px;height:16px;background:#c9c6b8"></div><div style="left:119px;top:318px;width:16px;height:16px;background:#dadada"></div><div style="left:135px;top:318px;width:16px;height:16px;background:#bab9c0"></div><div style="left:151px;top:318px;width:16px;height:16px;background:#dcdcdc"></div><div style="left:167px;top:318px;width:16px;height:16px;background:#c5c5c8"></div><div style="left:183px;top:318px;width:16px;height:16px;background:#bebdc2"></div><div style="left:199px;top:318px;width:16px;height:16px;background:#d6d6d8"></div><div style="left:215px;top:318px;width:16px;height:16px;background:#d1d1d7"></div><div style="left:231px;top:318px;width:16px;height:16px;background:#dcdcdc"></div><div style="left:247px;top:318px;width:16px;height:16px;background:#d1d1d3"></div><div style="left:263px;top:318px;width:16px;height:16px;background:#c9c9cb"></div><div style="left:279px;top:318px;width:16px;height:16px;background:#d6d6d6"></div><div style="left:55px;top:334px;width:16px;height:16px;background:#e3e3e3"></div><div style="left:71px;top:334px;width:16px;height:16px;background:#dedfe1"></div><div style="left:87px;top:334px;width:16px;height:16px;background:#e3e3e3"></div><div style="left:103px;top:334px;width:16px;height:16px;background:#dcdcdd"></div><div style="left:119px;top:334px;width:16px;height:16px;background:#e2e2e2"></div><div style="left:135px;top:334px;width:16px;height:16px;background:#d9d9d9"></div><div style="left:151px;top:334px;width:16px;height:16px;background:#dbdbdd"></div><div style="left:167px;top:334px;width:16px;height:16px;background:#e0e0e0"></div><div style="left:183px;top:334px;width:16px;height:16px;background:#dfdfe0"></div><div style="left:199px;top:334px;width:16px;height:16px;background:#e5e5e5"></div><div style="left:215px;top:334px;width:16px;height:16px;background:#d1d1d3"></div><div style="left:231px;top:334px;width:16px;height:16px;background:#e3e3e3"></div><div style="left:247px;top:334px;width:16px;height:16px;background:#e3e3e3"></div><div style="left:263px;top:334px;width:16px;height:16px;background:#e3e3e3"></div><div style="left:279px;top:334px;width:16px;height:16px;background:#e3e3e3"></div><div style="left:23px;top:350px;width:16px;height:16px;background:#fcfcfc"></div><div style="left:55px;top:350px;width:16px;height:16px;background:#d8d8da"></div><div style="left:71px;top:350px;width:16px;height:16px;background:#e1e1e3"></div><div style="left:87px;top:350px;width:16px;height:16px;background:#e8e8e8"></div><div style="left:103px;top:350px;width:16px;height:16px;background:#d5d5d7"></div><div style="left:119px;top:350px;width:16px;height:16px;background:#e0e0e0"></div><div style="left:135px;top:350px;width:16px;height:16px;background:#e5e5e5"></div><div style="left:151px;top:350px;width:16px;height:16px;background:#d1d1d5"></div><div style="left:167px;top:350px;width:16px;height:16px;background:#dcdcdc"></div><div style="left:183px;top:350px;width:16px;height:16px;background:#d4d4d5"></div><div style="left:199px;top:350px;width:16px;height:16px;background:#e5e5e5"></div><div style="left:215px;top:350px;width:16px;height:16px;background:#dadadc"></div><div style="left:231px;top:350px;width:16px;height:16px;background:#dadadc"></div><div style="left:247px;top:350px;width:16px;height:16px;background:#c3c4c7"></div><div style="left:263px;top:350px;width:16px;height:16px;background:#e3e3e3"></div><div style="left:279px;top:350px;width:16px;height:16px;background:#c7c8ca"></div><div style="left:295px;top:350px;width:16px;height:16px;background:#f8f8f8"></div><div style="left:311px;top:350px;width:16px;height:16px;background:#f8f8f8"></div><div style="left:55px;top:366px;width:16px;height:16px;background:#d1d1d2"></div><div style="left:71px;top:366px;width:16px;height:16px;background:#ececec"></div><div style="left:87px;top:366px;width:16px;height:16px;background:#d7d8dc"></div><div style="left:103px;top:366px;width:16px;height:16px;background:#d3d3d4"></div><div style="left:119px;top:366px;width:16px;height:16px;background:#d6d6d8"></div><div style="left:135px;top:366px;width:16px;height:16px;background:#cdcdcf"></div><div style="left:151px;top:366px;width:16px;height:16px;background:#d5d5d7"></div><div style="left:167px;top:366px;width:16px;height:16px;background:#c6c6c9"></div><div style="left:183px;top:366px;width:16px;height:16px;background:#bebdc2"></div><div style="left:199px;top:366px;width:16px;height:16px;background:#d4d4d6"></div><div style="left:215px;top:366px;width:16px;height:16px;background:#c3c2c8"></div><div style="left:231px;top:366px;width:16px;height:16px;background:#c3c2c8"></div><div style="left:247px;top:366px;width:16px;height:16px;background:#b4b4b9"></div><div style="left:263px;top:366px;width:16px;height:16px;background:#dcdcde"></div><div style="left:279px;top:366px;width:16px;height:16px;background:#bdbcc1"></div><div style="left:295px;top:366px;width:16px;height:16px;background:#f5f5f5"></div><div style="left:311px;top:366px;width:16px;height:16px;background:#f5f5f5"></div><div style="left:39px;top:382px;width:16px;height:16px;background:#f3f4f7"></div><div style="left:55px;top:382px;width:16px;height:16px;background:#cdcdd1"></div><div style="left:71px;top:382px;width:16px;height:16px;background:#e8e8e8"></div><div style="left:87px;top:382px;width:16px;height:16px;background:#cbccd1"></div><div style="left:103px;top:382px;width:16px;height:16px;background:#b3b4ba"></div><div style="left:119px;top:382px;width:16px;height:16px;background:#b8bbc6"></div><div style="left:135px;top:382px;width:16px;height:16px;background:#a5a4b0"></div><div style="left:151px;top:382px;width:16px;height:16px;background:#d3d3d5"></div><div style="left:167px;top:382px;width:16px;height:16px;background:#b5b5bb"></div><div style="left:183px;top:382px;width:16px;height:16px;background:#a8a8ae"></div><div style="left:199px;top:382px;width:16px;height:16px;background:#b9b8be"></div><div style="left:215px;top:382px;width:16px;height:16px;background:#bcbbc1"></div><div style="left:231px;top:382px;width:16px;height:16px;background:#b1b1b7"></div><div style="left:247px;top:382px;width:16px;height:16px;background:#b1b1b7"></div><div style="left:263px;top:382px;width:16px;height:16px;background:#b5b5ba"></div><div style="left:279px;top:382px;width:16px;height:16px;background:#b3b3b8"></div><div style="left:295px;top:382px;width:16px;height:16px;background:#f4f4f5"></div><div style="left:311px;top:382px;width:16px;height:16px;background:#f4f4f5"></div><div style="left:39px;top:398px;width:16px;height:16px;background:#eeeff2"></div><div style="left:55px;top:398px;width:16px;height:16px;background:#cbccd0"></div><div style="left:71px;top:398px;width:16px;height:16px;background:#e5e5e5"></div><div style="left:87px;top:398px;width:16px;height:16px;background:#cbcbcf"></div><div style="left:103px;top:398px;width:16px;height:16px;background:#a9abb2"></div><div style="left:119px;top:398px;width:16px;height:16px;background:#b6b7bc"></div><div style="left:135px;top:398px;width:16px;height:16px;background:#adadb3"></div><div style="left:151px;top:398px;width:16px;height:16px;background:#d3d3d5"></div><div style="left:167px;top:398px;width:16px;height:16px;background:#b4b3ba"></div><div style="left:183px;top:398px;width:16px;height:16px;background:#aeadb3"></div><div style="left:199px;top:398px;width:16px;height:16px;background:#bdbcc2"></div><div style="left:215px;top:398px;width:16px;height:16px;background:#bebdc3"></div><div style="left:231px;top:398px;width:16px;height:16px;background:#afafb7"></div><div style="left:247px;top:398px;width:16px;height:16px;background:#b1b0b9"></div><div style="left:263px;top:398px;width:16px;height:16px;background:#adadb2"></div><div style="left:279px;top:398px;width:16px;height:16px;background:#b7b7bb"></div><div style="left:295px;top:398px;width:16px;height:16px;background:#f4f4f4"></div><div style="left:311px;top:398px;width:16px;height:16px;background:#f4f4f4"></div><div style="left:39px;top:414px;width:16px;height:16px;background:#e3e3e6"></div><div style="left:55px;top:414px;width:16px;height:16px;background:#cbcbd0"></div><div style="left:71px;top:414px;width:16px;height:16px;background:#e5e5e5"></div><div style="left:87px;top:414px;width:16px;height:16px;background:#bbbbc0"></div><div style="left:103px;top:414px;width:16px;height:16px;background:#bababf"></div><div style="left:119px;top:414px;width:16px;height:16px;background:#bbbbc0"></div><div style="left:135px;top:414px;width:16px;height:16px;background:#c9c9cd"></div><div style="left:151px;top:414px;width:16px;height:16px;background:#d6d6d8"></div><div style="left:167px;top:414px;width:16px;height:16px;background:#c5c5c9"></div><div style="left:183px;top:414px;width:16px;height:16px;background:#c3c2c7"></div><div style="left:199px;top:414px;width:16px;height:16px;background:#c8c8cc"></div><div style="left:215px;top:414px;width:16px;height:16px;background:#c8c8cc"></div><div style="left:231px;top:414px;width:16px;height:16px;background:#bdbdc3"></div><div style="left:247px;top:414px;width:16px;height:16px;background:#bdbdc3"></div><div style="left:263px;top:414px;width:16px;height:16px;background:#bdbdc2"></div><div style="left:279px;top:414px;width:16px;height:16px;background:#bfbfc3"></div><div style="left:295px;top:414px;width:16px;height:16px;background:#f3f3f3"></div><div style="left:311px;top:414px;width:16px;height:16px;background:#f3f3f3"></div><div style="left:39px;top:430px;width:16px;height:14px;background:#efefef"></div><div style="left:55px;top:430px;width:16px;height:14px;background:#efefef"></div><div style="left:71px;top:430px;width:16px;height:14px;background:#efefef"></div><div style="left:87px;top:430px;width:16px;height:14px;background:#efefef"></div><div style="left:103px;top:430px;width:16px;height:14px;background:#efefef"></div><div style="left:119px;top:430px;width:16px;height:14px;background:#efefef"></div><div style="left:135px;top:430px;width:16px;height:14px;background:#efefef"></div><div style="left:151px;top:430px;width:16px;height:14px;background:#efefef"></div><div style="left:167px;top:430px;width:16px;height:14px;background:#efefef"></div><div style="left:183px;top:430px;width:16px;height:14px;background:#efefef"></div><div style="left:199px;top:430px;width:16px;height:14px;background:#efefef"></div><div style="left:215px;top:430px;width:16px;height:14px;background:#efefef"></div><div style="left:231px;top:430px;width:16px;height:14px;background:#efefef"></div><div style="left:247px;top:430px;width:16px;height:14px;background:#efefef"></div><div style="left:263px;top:430px;width:16px;height:14px;background:#efefef"></div><div style="left:279px;top:430px;width:16px;height:14px;background:#efefef"></div><div style="left:295px;top:430px;width:16px;height:14px;background:#fbfbfb"></div><div style="left:311px;top:430px;width:16px;height:14px;background:#fbfbfb"></div></div>
<div style="left:883px;top:500px;width:355px;height:457px;background:transparent;border:2px solid #000;"></div>
</body></html>
